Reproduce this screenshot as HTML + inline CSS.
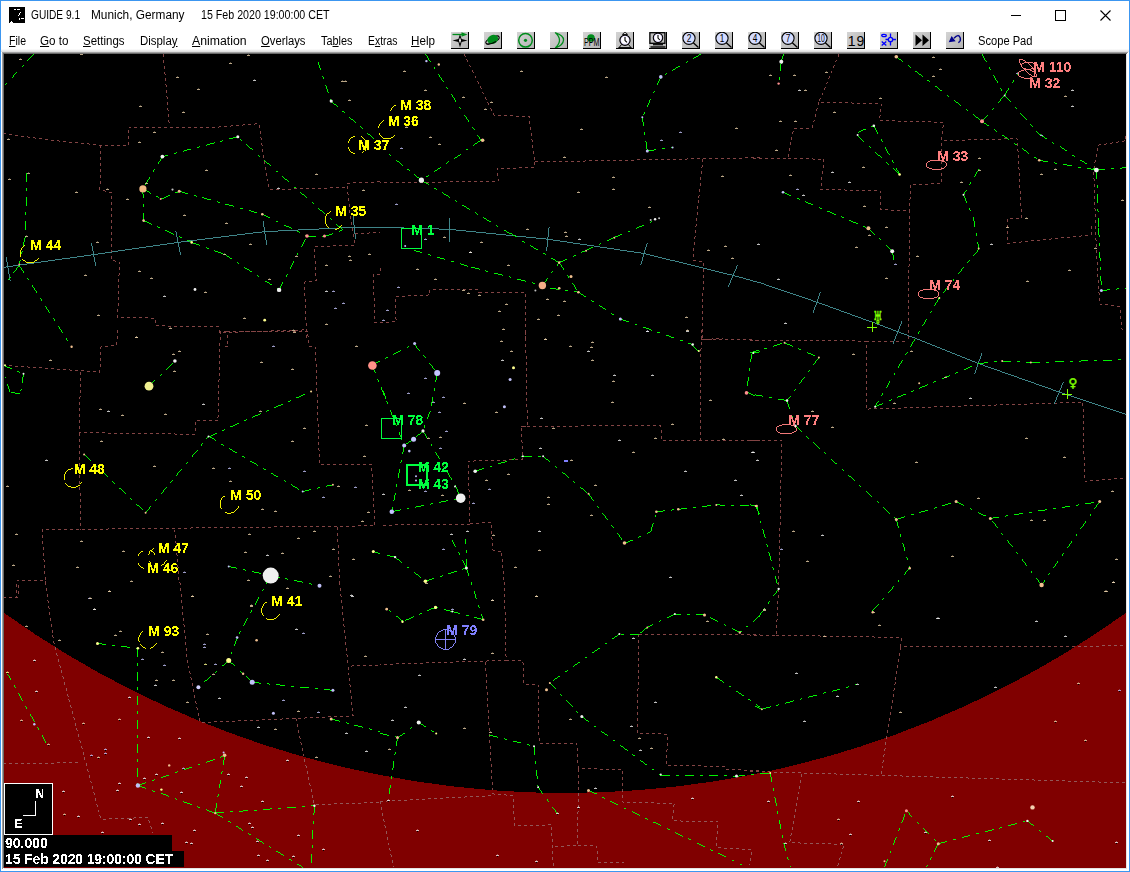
<!DOCTYPE html>
<html><head><meta charset="utf-8"><title>GUIDE 9.1</title>
<style>
html,body{margin:0;padding:0;}
body{width:1130px;height:872px;overflow:hidden;background:#fff;font-family:"Liberation Sans",sans-serif;position:relative;}
#win{position:absolute;left:0;top:0;width:1128px;height:870px;border:1px solid #3c96f0;background:#fff;}
#title{position:absolute;left:0;top:0;width:1128px;height:29px;background:#fff;}
#title .t{position:absolute;top:7px;display:inline-block;transform-origin:0 0;font-size:12px;color:#000;white-space:pre;}
#menu{position:absolute;left:0;top:29px;width:1128px;height:20px;background:#fff;}
#menu span.m{position:absolute;top:4px;display:inline-block;transform-origin:0 0;font-size:12px;color:#000;white-space:pre;}
#menu u{text-decoration:underline;text-underline-offset:1px;}
.tb{position:absolute;top:2px;width:17px;height:16px;background:linear-gradient(135deg,#d4d4d4,#b4b4b4);border-right:1px solid #000;border-bottom:1px solid #000;box-sizing:content-box;overflow:hidden}
#chartwrap{position:absolute;left:1px;top:50px;width:1126px;height:818px;background:#f0f0f0;}
svg{position:absolute;left:0;top:0;}
.lbl{font-family:"Liberation Sans",sans-serif;font-weight:bold;font-size:14px;}
</style></head><body>
<div id="win">

<div id="title">
<svg width="30" height="29" viewBox="0 0 30 29"><rect x="8" y="6" width="16" height="16" fill="#000"/><path d="M13 8h2M16 8h3M18 13l2-2M17 15l2-2M18 17l1 2M20 17h3M9 21h3M10 20v2" stroke="#fff" stroke-width="1" fill="none" shape-rendering="crispEdges"/></svg>
<span class="t" style="left:30px;transform:scaleX(0.8448)">GUIDE 9.1</span>
<span class="t" style="left:89.5px;transform:scaleX(0.9875)">Munich, Germany</span>
<span class="t" style="left:199.5px;transform:scaleX(0.8880)">15 Feb 2020 19:00:00 CET</span>
<svg width="1128" height="29" viewBox="1 1 1128 29" style="left:0;top:0"><g stroke="#000" stroke-width="1" fill="none" shape-rendering="crispEdges"><path d="M1011 15.5h10"/><rect x="1055.5" y="10.5" width="10" height="10"/></g><path d="M1100.5 10.5l10 10M1110.5 10.5l-10 10" stroke="#000" stroke-width="1.1" fill="none"/></svg>
</div>
<div id="menu">
<span class="m" style="left:8px;transform:scaleX(0.8788)"><u>F</u>ile</span>
<span class="m" style="left:39px;transform:scaleX(0.9718)"><u>G</u>o to</span>
<span class="m" style="left:82px;transform:scaleX(0.9575)"><u>S</u>ettings</span>
<span class="m" style="left:138.5px;transform:scaleX(0.9528)">Displa<u>y</u></span>
<span class="m" style="left:190.5px;transform:scaleX(1.0214)"><u>A</u>nimation</span>
<span class="m" style="left:260px;transform:scaleX(0.9399)"><u>O</u>verlays</span>
<span class="m" style="left:320px;transform:scaleX(0.9081)">Ta<u>b</u>les</span>
<span class="m" style="left:366.5px;transform:scaleX(0.8676)">E<u>x</u>tras</span>
<span class="m" style="left:410px;transform:scaleX(0.9722)"><u>H</u>elp</span>
<div class="tb" style="left:450px"><svg width="18" height="16" viewBox="0 0 18 16"><path d="M9 2L10.6 6.9L16.5 8.5L10.6 10.1L9 15.5L7.4 10.1L1.5 8.5L7.4 6.9Z" fill="#000"/><path d="M9 5.5L10 8.5L9 11.5L8 8.5Z" fill="#fff"/><path d="M1.5 2.5H13" stroke="#008c1c" stroke-width="1.3"/><path d="M10.5 0.2L16.5 2.5L10.5 4.8Z" fill="#008c1c"/></svg></div>
<div class="tb" style="left:483px"><svg width="18" height="16" viewBox="0 0 18 16"><ellipse cx="8.5" cy="8" rx="7.3" ry="2.6" transform="rotate(-25 8.5 8)" fill="none" stroke="#000" stroke-width="1.1"/><ellipse cx="8.7" cy="7.4" rx="5.6" ry="4.4" transform="rotate(-25 8.7 7.4)" fill="#008c1c"/><path d="M2.2 11.6 Q5 13.5 12 9.6" fill="none" stroke="#000" stroke-width="1.1"/></svg></div>
<div class="tb" style="left:516px"><svg width="18" height="16" viewBox="0 0 18 16"><circle cx="8.5" cy="8.3" r="6.8" fill="none" stroke="#008c1c" stroke-width="1.5"/><circle cx="8.5" cy="8.3" r="1.6" fill="#008c1c"/></svg></div>
<div class="tb" style="left:549px"><svg width="18" height="16" viewBox="0 0 18 16"><path d="M5.5 0.8 Q14 3.5 13.5 8.3 Q13 13.5 5.5 15.8 Q9.5 12 9.5 8.3 Q9.5 4.5 5.5 0.8Z" fill="none" stroke="#008c1c" stroke-width="1.3" stroke-linejoin="round"/></svg></div>
<div class="tb" style="left:582px"><svg width="18" height="16" viewBox="0 0 18 16"><circle cx="8" cy="6" r="3.8" fill="#008c1c"/><text x="8.8" y="14.3" font-family="Liberation Sans,sans-serif" font-size="10.5" text-anchor="middle" fill="#000" textLength="15.5" lengthAdjust="spacingAndGlyphs">PPM</text></svg></div>
<div class="tb" style="left:615px"><svg width="18" height="16" viewBox="0 0 18 16"><path d="M6.5 2.5Q9 -1.5 11.5 2.5Z" fill="#fff" stroke="#000" stroke-width="0.9"/><path d="M5.5 12.5L3 15.7M12.5 12.5L15 15.7M2.5 15.6H15.5" stroke="#000" stroke-width="1" fill="none"/><circle cx="9" cy="8.2" r="5.1" fill="#e4dcff" stroke="#000" stroke-width="1.2"/><circle cx="9" cy="8.2" r="3.6" fill="#fff"/><path d="M9 5V8.5L11 10.3" stroke="#000" stroke-width="1.1" fill="none"/></svg></div>
<div class="tb" style="left:648px"><svg width="18" height="16" viewBox="0 0 18 16"><rect x="0.9" y="0.7" width="15" height="10.6" fill="#c0c0c0" stroke="#000" stroke-width="1.3"/><circle cx="9" cy="5.8" r="4.7" fill="#e4dcff" stroke="#000" stroke-width="1.1"/><circle cx="9" cy="5.8" r="3.2" fill="#fff"/><path d="M9 3V6L10.8 8" stroke="#000" stroke-width="1.1" fill="none"/><path d="M4 12.7H14" stroke="#000" stroke-width="1.2"/><path d="M1.5 15H16.5" stroke="#000" stroke-width="1.4"/></svg></div>
<div class="tb" style="left:681px"><svg width="18" height="16" viewBox="0 0 18 16"><line x1="11" y1="10.5" x2="16.5" y2="15.5" stroke="#000" stroke-width="1.3"/><circle cx="7" cy="6.3" r="6.1" fill="#d4dcff" stroke="#000" stroke-width="1.1"/><text x="7" y="9.6" font-family="Liberation Sans,sans-serif" font-size="10" text-anchor="middle" fill="#000" textLength="4.6" lengthAdjust="spacingAndGlyphs">2</text></svg></div>
<div class="tb" style="left:714px"><svg width="18" height="16" viewBox="0 0 18 16"><line x1="11" y1="10.5" x2="16.5" y2="15.5" stroke="#000" stroke-width="1.3"/><circle cx="7" cy="6.3" r="6.1" fill="#d4dcff" stroke="#000" stroke-width="1.1"/><text x="7" y="9.6" font-family="Liberation Sans,sans-serif" font-size="10" text-anchor="middle" fill="#000" textLength="4.6" lengthAdjust="spacingAndGlyphs">1</text></svg></div>
<div class="tb" style="left:747px"><svg width="18" height="16" viewBox="0 0 18 16"><line x1="11" y1="10.5" x2="16.5" y2="15.5" stroke="#000" stroke-width="1.3"/><circle cx="7" cy="6.3" r="6.1" fill="#d4dcff" stroke="#000" stroke-width="1.1"/><text x="7" y="9.6" font-family="Liberation Sans,sans-serif" font-size="10" text-anchor="middle" fill="#000" textLength="4.6" lengthAdjust="spacingAndGlyphs">4</text></svg></div>
<div class="tb" style="left:780px"><svg width="18" height="16" viewBox="0 0 18 16"><line x1="11" y1="10.5" x2="16.5" y2="15.5" stroke="#000" stroke-width="1.3"/><circle cx="7" cy="6.3" r="6.1" fill="#d4dcff" stroke="#000" stroke-width="1.1"/><text x="7" y="9.6" font-family="Liberation Sans,sans-serif" font-size="10" text-anchor="middle" fill="#000" textLength="4.6" lengthAdjust="spacingAndGlyphs">7</text></svg></div>
<div class="tb" style="left:813px"><svg width="18" height="16" viewBox="0 0 18 16"><line x1="11" y1="10.5" x2="16.5" y2="15.5" stroke="#000" stroke-width="1.3"/><circle cx="7" cy="6.3" r="6.1" fill="#d4dcff" stroke="#000" stroke-width="1.1"/><text x="7" y="9.6" font-family="Liberation Sans,sans-serif" font-size="10" text-anchor="middle" fill="#000" textLength="7.5" lengthAdjust="spacingAndGlyphs">10</text></svg></div>
<div class="tb" style="left:846px"><svg width="18" height="16" viewBox="0 0 18 16"><text x="9.5" y="13.5" font-family="Liberation Sans,sans-serif" font-size="14" text-anchor="middle" fill="#000" letter-spacing="1">19</text></svg></div>
<div class="tb" style="left:879px"><svg width="18" height="16" viewBox="0 0 18 16"><g fill="none" stroke="#0000ff" stroke-width="1.3"><ellipse cx="4" cy="3.5" rx="2.3" ry="1.2"/><path d="M1.7 9.5L6.3 13.5M6.3 9.5L1.7 13.5"/><circle cx="10.5" cy="7.5" r="2.2"/><path d="M10.5 1.5V5.3M10.5 9.7V13.5M5.5 7.5H8.3M12.7 7.5H16"/></g></svg></div>
<div class="tb" style="left:912px"><svg width="18" height="16" viewBox="0 0 18 16"><path d="M2.5 2.5L9 8.3L2.5 14Z M9.5 2.5L16 8.3L9.5 14Z" fill="#000"/></svg></div>
<div class="tb" style="left:945px"><svg width="18" height="16" viewBox="0 0 18 16"><path d="M8 6.3 Q12.5 1 14.3 6 Q15 9.3 12.3 10.7" fill="none" stroke="#00008c" stroke-width="1.4"/><path d="M2.7 10.3L9.6 9.3L5.6 4Z" fill="#00008c"/></svg></div>
<span class="m" style="left:977px;transform:scaleX(0.9286)">Scope Pad</span>
</div>
<div style="position:absolute;left:0;top:48px;width:1128px;height:3px;background:linear-gradient(#fff,#d8d8d8)"></div>
<div style="position:absolute;left:1px;top:51px;width:1126px;height:817px;background:#fff;border-left:1px solid #a0a0a0;border-top:1px solid #a0a0a0;box-sizing:border-box"></div>
<div style="position:absolute;left:2px;top:52px;width:1124px;height:815px;background:#e8e8e8;border-left:1px solid #696969;border-top:1px solid #696969;box-sizing:border-box"></div>
<div style="position:absolute;left:3px;top:867px;width:1123px;height:1px;background:#e3e3e3"></div><div style="position:absolute;left:1125px;top:53px;width:1px;height:815px;background:#e3e3e3"></div>
</div>
<svg width="1122" height="814" viewBox="4 54 1122 814" style="left:4px;top:54px">
<rect x="4" y="54" width="1122" height="814" fill="#000"/>
<path d="M4 612.9 A964 964 0 0 0 1126 612.9 L1126 868 L4 868 Z" fill="#800000" shape-rendering="crispEdges"/>
<g fill="none" stroke="#8a4848" stroke-width="0.95" stroke-dasharray="3 3" shape-rendering="crispEdges">
<path d="M163.1 54.0 L166.5 90.4 L169.2 124.7"/>
<path d="M128.5 127.4 L218.6 127.0 L258.9 123.7 L263.3 154.3 L269.0 189.6 L346.4 187.6"/>
<path d="M380.0 181.9 L347.0 183.2 L349.7 211.5 L354.8 245.1 L314.4 246.8 L316.1 280.5 L304.3 282.1 L306.7 339.3"/>
<path d="M354.8 233.4 L380.0 232.7"/>
<path d="M380.0 274.7 L373.3 274.7 L375.0 322.5 L380.0 322.5"/>
<path d="M3.4 133.4 L50.4 140.2 L100.9 145.2 L128.5 145.2 L128.5 127.4"/>
<path d="M100.9 145.2 L99.9 189.6 L112.0 193.0 L111.0 260.3 L119.4 261.9 L117.7 317.5 L155.4 318.1 L156.4 325.9 L218.6 326.5 L219.3 332.6 L306.0 329.9"/>
<path d="M464.1 54.0 L494.3 115.6 L529.0 116.3 L534.7 162.0 L702.8 158.7 L760.0 157.7"/>
<path d="M534.7 162.0 L534.7 167.7 L497.0 168.4 L498.4 181.2 L380.0 182.9"/>
<path d="M702.8 158.7 L697.8 208.1 L692.7 260.3 L703.5 261.9 L702.2 339.3 L723.0 338.7"/>
<path d="M380.0 268.0 L381.7 273.7"/>
<path d="M380.0 322.5 L396.1 321.8 L395.1 296.6 L429.8 294.9 L429.8 289.9 L477.5 289.5 L479.2 292.9 L525.3 292.9 L525.3 339.3"/>
<path d="M839.1 54.0 L818.9 102.1 L881.2 103.8 L879.5 120.6 L943.4 122.3 L941.7 140.8 L1017.3 138.5 L1021.7 218.2 L1007.3 219.2 L1007.3 243.4 L1091.3 235.0 L1091.3 226.6 L1094.7 226.6"/>
<path d="M818.9 102.1 L812.2 128.1 L793.7 128.1 L787.7 158.3 L750.0 158.3"/>
<path d="M787.7 158.3 L824.0 159.3 L820.6 189.6 L880.1 190.6 L880.1 209.8 L909.7 210.5 L910.4 184.6 L941.7 183.6 L941.7 140.8"/>
<path d="M909.7 210.5 L908.1 339.3"/>
<path d="M1125.6 135.8 L1125.6 140.8 L1098.1 145.2 L1093.7 169.4 L1096.4 251.9 L1099.7 304.0 L1119.9 306.4 L1121.6 329.2 L1125.6 329.2"/>
<path d="M117.7 330.0 L116.7 345.1 L100.9 346.8 L99.9 372.1 L3.4 365.3"/>
<path d="M80.7 372.1 L79.0 432.6 L195.0 434.3 L195.0 420.8 L217.9 420.8 L220.3 331.7 L227.0 331.7 L228.0 346.8 L223.6 346.8"/>
<path d="M227.0 331.0 L307.7 331.0 L308.7 346.1 L315.4 346.8 L319.5 464.6 L371.6 464.6 L375.0 525.8 L42.0 529.8 L45.4 580.6 L16.8 580.6 L16.8 597.5 L3.4 597.5"/>
<path d="M79.0 432.6 L80.7 529.5"/>
<path d="M45.4 580.6 L45.4 582.0"/>
<path d="M174.9 529.5 L179.2 582.0"/>
<path d="M337.3 526.8 L339.6 582.0"/>
<path d="M525.6 331.7 L527.3 425.9 L521.2 426.6 L522.9 459.5 L468.1 461.2 L470.1 524.5 L380.0 525.1"/>
<path d="M470.1 523.8 L491.0 522.4 L492.7 550.4 L501.7 551.4 L503.8 582.0"/>
<path d="M521.2 426.6 L660.8 425.2 L661.8 440.0 L760.0 440.0"/>
<path d="M701.2 330.0 L700.1 440.0"/>
<path d="M701.2 339.4 L760.0 340.1"/>
<path d="M750.0 340.1 L866.0 341.1 L866.0 409.1 L1082.9 402.3 L1084.6 481.4 L1125.6 478.0"/>
<path d="M866.0 341.1 L908.1 341.1"/>
<path d="M750.0 440.0 L781.9 440.0 L778.6 588.7"/>
<path d="M45.4 582.0 L53.8 642.6 L100.9 819.2 L148.0 817.5 L153.0 832.6"/>
<path d="M179.9 582.0 L187.3 660.1 L200.1 722.6 L353.1 715.9 L348.1 666.1 L380.0 665.4"/>
<path d="M339.6 582.0 L348.1 666.1"/>
<path d="M295.9 718.3 L304.3 758.6 L314.4 804.7 L380.0 802.4"/>
<path d="M3.4 763.7 L80.7 762.7"/>
<path d="M3.4 597.1 L18.5 597.1 L18.5 582.0"/>
<path d="M504.4 582.0 L506.1 660.4 L380.0 664.4"/>
<path d="M506.1 660.4 L522.9 660.4 L523.9 683.9 L538.1 684.6 L539.1 743.5 L576.7 743.5 L578.4 768.7 L622.8 769.4 L622.8 802.4 L674.2 803.4 L672.6 820.9 L718.0 821.5 L716.3 847.8 L751.6 849.5 L749.9 864.6"/>
<path d="M485.3 661.7 L492.7 793.9 L512.8 795.6 L514.5 825.9 L551.5 824.9 L553.2 867.3"/>
<path d="M380.0 801.4 L492.7 795.6"/>
<path d="M578.4 768.7 L577.7 845.4 L553.2 846.8"/>
<path d="M577.7 845.4 L596.9 846.1 L597.9 862.9 L623.8 862.9"/>
<path d="M638.9 634.1 L760.0 634.8"/>
<path d="M638.9 634.1 L637.3 733.4 L667.5 734.1 L666.5 765.4 L724.7 766.4 L726.4 769.7 L760.0 770.4"/>
<path d="M380.0 801.4 L393.5 867.3"/>
<path d="M778.6 588.7 L776.2 635.2 L750.0 635.2"/>
<path d="M776.2 635.2 L901.3 637.5 L900.7 646.9 L1125.6 645.9"/>
<path d="M900.7 646.9 L881.2 773.8"/>
<path d="M750.0 771.4 L1125.6 782.8"/>
<path d="M802.1 773.8 L789.7 842.7 L844.2 844.4 L837.4 867.3"/>
</g>
<clipPath id="hz"><path d="M4 612.9 A964 964 0 0 0 1126 612.9 L1126 868 L4 868 Z"/></clipPath>
<g fill="none" stroke="#925858" stroke-width="0.95" stroke-dasharray="3 3" shape-rendering="crispEdges" clip-path="url(#hz)">
<path d="M163.1 54.0 L166.5 90.4 L169.2 124.7"/>
<path d="M128.5 127.4 L218.6 127.0 L258.9 123.7 L263.3 154.3 L269.0 189.6 L346.4 187.6"/>
<path d="M380.0 181.9 L347.0 183.2 L349.7 211.5 L354.8 245.1 L314.4 246.8 L316.1 280.5 L304.3 282.1 L306.7 339.3"/>
<path d="M354.8 233.4 L380.0 232.7"/>
<path d="M380.0 274.7 L373.3 274.7 L375.0 322.5 L380.0 322.5"/>
<path d="M3.4 133.4 L50.4 140.2 L100.9 145.2 L128.5 145.2 L128.5 127.4"/>
<path d="M100.9 145.2 L99.9 189.6 L112.0 193.0 L111.0 260.3 L119.4 261.9 L117.7 317.5 L155.4 318.1 L156.4 325.9 L218.6 326.5 L219.3 332.6 L306.0 329.9"/>
<path d="M464.1 54.0 L494.3 115.6 L529.0 116.3 L534.7 162.0 L702.8 158.7 L760.0 157.7"/>
<path d="M534.7 162.0 L534.7 167.7 L497.0 168.4 L498.4 181.2 L380.0 182.9"/>
<path d="M702.8 158.7 L697.8 208.1 L692.7 260.3 L703.5 261.9 L702.2 339.3 L723.0 338.7"/>
<path d="M380.0 268.0 L381.7 273.7"/>
<path d="M380.0 322.5 L396.1 321.8 L395.1 296.6 L429.8 294.9 L429.8 289.9 L477.5 289.5 L479.2 292.9 L525.3 292.9 L525.3 339.3"/>
<path d="M839.1 54.0 L818.9 102.1 L881.2 103.8 L879.5 120.6 L943.4 122.3 L941.7 140.8 L1017.3 138.5 L1021.7 218.2 L1007.3 219.2 L1007.3 243.4 L1091.3 235.0 L1091.3 226.6 L1094.7 226.6"/>
<path d="M818.9 102.1 L812.2 128.1 L793.7 128.1 L787.7 158.3 L750.0 158.3"/>
<path d="M787.7 158.3 L824.0 159.3 L820.6 189.6 L880.1 190.6 L880.1 209.8 L909.7 210.5 L910.4 184.6 L941.7 183.6 L941.7 140.8"/>
<path d="M909.7 210.5 L908.1 339.3"/>
<path d="M1125.6 135.8 L1125.6 140.8 L1098.1 145.2 L1093.7 169.4 L1096.4 251.9 L1099.7 304.0 L1119.9 306.4 L1121.6 329.2 L1125.6 329.2"/>
<path d="M117.7 330.0 L116.7 345.1 L100.9 346.8 L99.9 372.1 L3.4 365.3"/>
<path d="M80.7 372.1 L79.0 432.6 L195.0 434.3 L195.0 420.8 L217.9 420.8 L220.3 331.7 L227.0 331.7 L228.0 346.8 L223.6 346.8"/>
<path d="M227.0 331.0 L307.7 331.0 L308.7 346.1 L315.4 346.8 L319.5 464.6 L371.6 464.6 L375.0 525.8 L42.0 529.8 L45.4 580.6 L16.8 580.6 L16.8 597.5 L3.4 597.5"/>
<path d="M79.0 432.6 L80.7 529.5"/>
<path d="M45.4 580.6 L45.4 582.0"/>
<path d="M174.9 529.5 L179.2 582.0"/>
<path d="M337.3 526.8 L339.6 582.0"/>
<path d="M525.6 331.7 L527.3 425.9 L521.2 426.6 L522.9 459.5 L468.1 461.2 L470.1 524.5 L380.0 525.1"/>
<path d="M470.1 523.8 L491.0 522.4 L492.7 550.4 L501.7 551.4 L503.8 582.0"/>
<path d="M521.2 426.6 L660.8 425.2 L661.8 440.0 L760.0 440.0"/>
<path d="M701.2 330.0 L700.1 440.0"/>
<path d="M701.2 339.4 L760.0 340.1"/>
<path d="M750.0 340.1 L866.0 341.1 L866.0 409.1 L1082.9 402.3 L1084.6 481.4 L1125.6 478.0"/>
<path d="M866.0 341.1 L908.1 341.1"/>
<path d="M750.0 440.0 L781.9 440.0 L778.6 588.7"/>
<path d="M45.4 582.0 L53.8 642.6 L100.9 819.2 L148.0 817.5 L153.0 832.6"/>
<path d="M179.9 582.0 L187.3 660.1 L200.1 722.6 L353.1 715.9 L348.1 666.1 L380.0 665.4"/>
<path d="M339.6 582.0 L348.1 666.1"/>
<path d="M295.9 718.3 L304.3 758.6 L314.4 804.7 L380.0 802.4"/>
<path d="M3.4 763.7 L80.7 762.7"/>
<path d="M3.4 597.1 L18.5 597.1 L18.5 582.0"/>
<path d="M504.4 582.0 L506.1 660.4 L380.0 664.4"/>
<path d="M506.1 660.4 L522.9 660.4 L523.9 683.9 L538.1 684.6 L539.1 743.5 L576.7 743.5 L578.4 768.7 L622.8 769.4 L622.8 802.4 L674.2 803.4 L672.6 820.9 L718.0 821.5 L716.3 847.8 L751.6 849.5 L749.9 864.6"/>
<path d="M485.3 661.7 L492.7 793.9 L512.8 795.6 L514.5 825.9 L551.5 824.9 L553.2 867.3"/>
<path d="M380.0 801.4 L492.7 795.6"/>
<path d="M578.4 768.7 L577.7 845.4 L553.2 846.8"/>
<path d="M577.7 845.4 L596.9 846.1 L597.9 862.9 L623.8 862.9"/>
<path d="M638.9 634.1 L760.0 634.8"/>
<path d="M638.9 634.1 L637.3 733.4 L667.5 734.1 L666.5 765.4 L724.7 766.4 L726.4 769.7 L760.0 770.4"/>
<path d="M380.0 801.4 L393.5 867.3"/>
<path d="M778.6 588.7 L776.2 635.2 L750.0 635.2"/>
<path d="M776.2 635.2 L901.3 637.5 L900.7 646.9 L1125.6 645.9"/>
<path d="M900.7 646.9 L881.2 773.8"/>
<path d="M750.0 771.4 L1125.6 782.8"/>
<path d="M802.1 773.8 L789.7 842.7 L844.2 844.4 L837.4 867.3"/>
</g>
<g fill="none" stroke="#428c90" stroke-width="0.95" shape-rendering="crispEdges">
<path d="M4.0 267.3 L94.2 254.5 L178.2 242.4 L264.0 231.7 L353.1 227.3 L380.0 227.3 L448.9 229.3 L547.1 239.1 L644.0 253.5 L733.1 275.4 L760.0 282.8 L817.3 302.3 L877.8 324.2 L918.1 339.3 L978.7 363.6 L1064.4 393.9 L1125.6 414.1"/>
<path d="M6.1 256.9 L10.1 280.5"/>
<path d="M91.5 243.4 L95.8 266.3"/>
<path d="M175.9 231.0 L180.6 254.5"/>
<path d="M263.0 220.9 L266.7 244.5"/>
<path d="M353.1 215.9 L355.5 239.1"/>
<path d="M449.6 218.2 L449.6 241.8"/>
<path d="M549.2 226.6 L546.5 251.2"/>
<path d="M647.3 242.8 L640.6 265.3"/>
<path d="M737.5 265.3 L728.1 287.2"/>
<path d="M820.6 291.6 L812.9 313.4"/>
<path d="M902.0 321.0 L893.0 344.0"/>
<path d="M982.0 352.9 L974.6 373.7"/>
<path d="M1063.4 382.1 L1054.3 404.0"/>
</g>
<g fill="none" stroke="#00ff00" stroke-width="0.95" stroke-dasharray="9 6 3 6" shape-rendering="crispEdges">
<path d="M33.6 54.0L5.0 85.3"/>
<path d="M26.9 172.8L25.2 236.7M25.2 236.7L19.2 265.3"/>
<path d="M19.2 265.3L6.7 282.1"/>
<path d="M19.2 265.3L71.6 346.8"/>
<path d="M343.0 230.0L237.8 136.8M237.8 136.8L162.4 156.6M162.4 156.6L142.9 188.9M142.9 188.9L143.6 220.6M143.6 220.6L191.7 242.4M191.7 242.4L224.3 254.2M224.3 254.2L279.1 289.9M279.1 289.9L307.0 236.0M307.0 236.0L324.5 236.0M324.5 236.0L343.0 230.0"/>
<path d="M142.9 188.9L161.4 199.0M161.4 199.0L179.2 191.3M179.2 191.3L262.3 214.2M262.3 214.2L307.0 236.0"/>
<path d="M317.8 61.8L331.2 101.1M331.2 101.1L380.0 144.2"/>
<path d="M425.4 54.0L480.9 140.2M480.9 140.2L421.4 180.2M421.4 180.2L386.7 152.6"/>
<path d="M421.4 180.2L509.5 233.4M509.5 233.4L559.2 262.6M559.2 262.6L578.4 292.2"/>
<path d="M413.6 250.2L470.8 267.0M470.8 267.0L542.4 285.5M542.4 285.5L559.2 262.6M559.2 262.6L585.1 250.8M585.1 250.8L613.7 237.7M613.7 237.7L652.4 221.6"/>
<path d="M549.8 288.2L578.4 292.2M578.4 292.2L620.4 319.1M620.4 319.1L692.7 344.5M692.7 344.5L698.8 350.9"/>
<path d="M701.2 54.0L660.8 76.9M660.8 76.9L642.3 117.3M642.3 117.3L647.3 150.9M647.3 150.9L672.6 147.6"/>
<path d="M783.6 54.0L781.3 61.8M781.3 61.8L778.6 83.6"/>
<path d="M896.3 56.7L982.0 121.3M982.0 121.3L1039.2 160.3M1039.2 160.3L1096.4 170.1M1096.4 170.1L1125.6 167.7"/>
<path d="M982.0 54.0L1004.6 95.4M1004.6 95.4L1039.2 134.1M1039.2 134.1L1096.4 170.1"/>
<path d="M982.0 121.3L1004.6 95.4M1004.6 95.4L1019.0 71.9"/>
<path d="M857.6 132.4L873.8 125.7M873.8 125.7L899.6 174.5M899.6 174.5L857.6 135.8"/>
<path d="M783.0 192.3L868.4 228.3M868.4 228.3L892.2 251.2M892.2 251.2L894.6 263.6"/>
<path d="M978.7 169.4L963.5 194.7M963.5 194.7L973.6 218.2M973.6 218.2L978.7 248.5M978.7 248.5L939.3 297.9M939.3 297.9L875.1 406.7"/>
<path d="M1096.4 170.1L1098.7 228.3M1098.7 228.3L1101.4 290.5M1101.4 290.5L1125.6 288.2"/>
<path d="M3.4 365.3L23.5 373.7M23.5 373.7L20.2 393.9M20.2 393.9L10.1 392.2M10.1 392.2L5.0 377.1"/>
<path d="M149.0 386.2L174.9 361.0"/>
<path d="M84.1 454.5L145.6 512.7M145.6 512.7L208.5 436.6M208.5 436.6L311.1 391.6"/>
<path d="M208.5 436.6L302.7 491.5M302.7 491.5L332.9 484.8"/>
<path d="M228.7 566.5L270.7 575.6M270.7 575.6L319.5 585.7"/>
<path d="M373.3 551.4L380.0 553.7"/>
<path d="M372.0 365.0L414.6 343.5M414.6 343.5L437.2 373.1M437.2 373.1L430.4 410.7M430.4 410.7L423.0 430.9M423.0 430.9L413.6 439.3M413.6 439.3L404.2 445.4M404.2 445.4L391.8 511.7M391.8 511.7L460.7 498.2"/>
<path d="M372.0 365.0L404.2 445.4"/>
<path d="M423.0 430.9L455.7 486.4M455.7 486.4L460.7 498.2"/>
<path d="M383.4 390.6L386.7 402.3"/>
<path d="M475.2 471.3L522.9 456.2M522.9 456.2L543.1 456.2M543.1 456.2L588.5 493.8M588.5 493.8L624.5 543.0M624.5 543.0L650.7 531.9M650.7 531.9L656.4 511.7M656.4 511.7L678.3 509.3M678.3 509.3L716.3 504.9M716.3 504.9L755.6 506.0M755.6 506.0L760.0 515.0"/>
<path d="M386.7 555.4L395.1 557.1M395.1 557.1L425.4 581.3M425.4 581.3L466.4 567.9M466.4 567.9L452.3 540.3"/>
<path d="M466.4 567.9L465.8 538.6"/>
<path d="M760.0 351.9L751.6 353.5M751.6 353.5L746.5 392.2M746.5 392.2L755.0 396.3"/>
<path d="M750.0 352.9L784.6 342.8M784.6 342.8L818.9 357.6M818.9 357.6L787.0 400.6M787.0 400.6L750.0 393.9"/>
<path d="M787.0 400.6L795.4 425.9M795.4 425.9L896.3 519.4M896.3 519.4L909.7 568.2M909.7 568.2L871.1 612.6"/>
<path d="M896.3 519.4L956.1 501.6M956.1 501.6L990.4 518.4M990.4 518.4L1099.7 501.6M1099.7 501.6L1041.6 585.0M1041.6 585.0L990.4 518.4"/>
<path d="M750.0 504.9L756.7 506.0M756.7 506.0L778.6 589.0M778.6 589.0L756.7 619.3"/>
<path d="M875.1 406.7L978.7 363.6M978.7 363.6L1002.2 361.0M1002.2 361.0L1030.8 362.6M1030.8 362.6L1125.6 359.6"/>
<path d="M270.7 575.6L237.1 637.5M237.1 637.5L228.7 660.4M228.7 660.4L198.4 687.3"/>
<path d="M228.7 660.4L252.2 682.3M252.2 682.3L332.9 690.3"/>
<path d="M97.5 643.6L137.9 648.3M137.9 648.3L137.9 785.5M137.9 785.5L224.6 755.9M224.6 755.9L215.2 813.1M215.2 813.1L314.4 805.7M314.4 805.7L311.1 864.6"/>
<path d="M137.9 785.5L215.2 813.1M215.2 813.1L302.7 867.3"/>
<path d="M6.7 672.2L47.1 744.5"/>
<path d="M331.2 718.9L380.0 731.7"/>
<path d="M466.4 567.9L483.2 619.7M483.2 619.7L452.3 611.6M452.3 611.6L435.5 607.2M435.5 607.2L402.5 621.7M402.5 621.7L386.7 608.9"/>
<path d="M760.0 615.6L739.8 632.5M739.8 632.5L704.5 615.0M704.5 615.0L674.9 614.0M674.9 614.0L647.3 627.4M647.3 627.4L638.9 634.1M638.9 634.1L619.4 634.1M619.4 634.1L549.8 682.9M549.8 682.9L581.8 716.6M581.8 716.6L660.8 775.4M660.8 775.4L736.5 776.1M736.5 776.1L770.2 773.1"/>
<path d="M716.3 677.2L760.0 707.2"/>
<path d="M380.0 733.4L397.5 737.4M397.5 737.4L418.7 722.6M418.7 722.6L436.2 733.4"/>
<path d="M397.5 737.4L388.4 799.0"/>
<path d="M489.3 735.1L534.0 746.2M534.0 746.2L538.1 787.2M538.1 787.2L557.2 813.5"/>
<path d="M588.5 790.6L741.5 864.6"/>
<path d="M755.0 705.8L761.8 709.2M761.8 709.2L856.9 684.6"/>
<path d="M770.2 773.1L783.6 842.7M783.6 842.7L790.4 867.3"/>
<path d="M884.5 867.3L906.4 810.8M906.4 810.8L938.3 843.7M938.3 843.7L1027.4 820.9M1027.4 820.9L1052.7 841.0"/>
<path d="M938.3 843.7L926.5 867.3"/>
</g>
<path d="M19 59h3v1h-3z" fill="#e8d0a8" fill-opacity="0.8"/><path d="M20 58h1v1h-1z" fill="#e8d0a8" fill-opacity="0.35"/>
<path d="M80 54h3v1h-3z" fill="#e8d0a8" fill-opacity="0.8"/><path d="M81 53h1v1h-1z" fill="#e8d0a8" fill-opacity="0.35"/>
<path d="M229 63h3v1h-3z" fill="#e8d0a8" fill-opacity="0.8"/><path d="M230 62h1v1h-1z" fill="#e8d0a8" fill-opacity="0.35"/>
<path d="M247 55h3v1h-3z" fill="#e8d0a8" fill-opacity="0.8"/><path d="M248 54h1v1h-1z" fill="#e8d0a8" fill-opacity="0.35"/>
<path d="M176 77h3v1h-3z" fill="#e8d0a8" fill-opacity="0.8"/><path d="M177 76h1v1h-1z" fill="#e8d0a8" fill-opacity="0.35"/>
<path d="M197 89h3v1h-3z" fill="#e8d0a8" fill-opacity="0.8"/><path d="M198 88h1v1h-1z" fill="#e8d0a8" fill-opacity="0.35"/>
<path d="M139 106h3v1h-3z" fill="#e8d0a8" fill-opacity="0.8"/><path d="M140 105h1v1h-1z" fill="#e8d0a8" fill-opacity="0.35"/>
<path d="M182 112h3v1h-3z" fill="#e8d0a8" fill-opacity="0.8"/><path d="M183 111h1v1h-1z" fill="#e8d0a8" fill-opacity="0.35"/>
<path d="M153 132h3v1h-3z" fill="#e8d0a8" fill-opacity="0.8"/><path d="M154 131h1v1h-1z" fill="#e8d0a8" fill-opacity="0.35"/>
<path d="M138 142h3v1h-3z" fill="#e8d0a8" fill-opacity="0.8"/><path d="M139 141h1v1h-1z" fill="#e8d0a8" fill-opacity="0.35"/>
<path d="M7 139h3v1h-3z" fill="#e8d0a8" fill-opacity="0.8"/><path d="M8 138h1v1h-1z" fill="#e8d0a8" fill-opacity="0.35"/>
<path d="M8 179h3v1h-3z" fill="#e8d0a8" fill-opacity="0.8"/><path d="M9 178h1v1h-1z" fill="#e8d0a8" fill-opacity="0.35"/>
<path d="M27 173h3v1h-3z" fill="#e8d0a8" fill-opacity="0.8"/><path d="M28 172h1v1h-1z" fill="#e8d0a8" fill-opacity="0.35"/>
<path d="M75 192h3v1h-3z" fill="#e8d0a8" fill-opacity="0.8"/><path d="M76 191h1v1h-1z" fill="#e8d0a8" fill-opacity="0.35"/>
<path d="M106 189h3v1h-3z" fill="#e8d0a8" fill-opacity="0.8"/><path d="M107 188h1v1h-1z" fill="#e8d0a8" fill-opacity="0.35"/>
<path d="M126 199h3v1h-3z" fill="#e8d0a8" fill-opacity="0.8"/><path d="M127 198h1v1h-1z" fill="#e8d0a8" fill-opacity="0.35"/>
<path d="M183 215h3v1h-3z" fill="#e8d0a8" fill-opacity="0.8"/><path d="M184 214h1v1h-1z" fill="#e8d0a8" fill-opacity="0.35"/>
<path d="M225 223h3v1h-3z" fill="#e8d0a8" fill-opacity="0.8"/><path d="M226 222h1v1h-1z" fill="#e8d0a8" fill-opacity="0.35"/>
<path d="M205 170h3v1h-3z" fill="#e8d0a8" fill-opacity="0.8"/><path d="M206 169h1v1h-1z" fill="#e8d0a8" fill-opacity="0.35"/>
<path d="M315 174h3v1h-3z" fill="#e8d0a8" fill-opacity="0.8"/><path d="M316 173h1v1h-1z" fill="#e8d0a8" fill-opacity="0.35"/>
<path d="M362 190h3v1h-3z" fill="#e8d0a8" fill-opacity="0.8"/><path d="M363 189h1v1h-1z" fill="#e8d0a8" fill-opacity="0.35"/>
<path d="M341 81h3v1h-3z" fill="#e8d0a8" fill-opacity="0.8"/><path d="M342 80h1v1h-1z" fill="#e8d0a8" fill-opacity="0.35"/>
<path d="M344 81h3v1h-3z" fill="#e8d0a8" fill-opacity="0.8"/><path d="M345 80h1v1h-1z" fill="#e8d0a8" fill-opacity="0.35"/>
<path d="M348 100h3v1h-3z" fill="#e8d0a8" fill-opacity="0.8"/><path d="M349 99h1v1h-1z" fill="#e8d0a8" fill-opacity="0.35"/>
<path d="M84 275h3v1h-3z" fill="#e8d0a8" fill-opacity="0.8"/><path d="M85 274h1v1h-1z" fill="#e8d0a8" fill-opacity="0.35"/>
<path d="M138 271h3v1h-3z" fill="#e8d0a8" fill-opacity="0.8"/><path d="M139 270h1v1h-1z" fill="#e8d0a8" fill-opacity="0.35"/>
<path d="M150 278h3v1h-3z" fill="#e8d0a8" fill-opacity="0.8"/><path d="M151 277h1v1h-1z" fill="#e8d0a8" fill-opacity="0.35"/>
<path d="M204 292h3v1h-3z" fill="#e8d0a8" fill-opacity="0.8"/><path d="M205 291h1v1h-1z" fill="#e8d0a8" fill-opacity="0.35"/>
<path d="M97 315h3v1h-3z" fill="#e8d0a8" fill-opacity="0.8"/><path d="M98 314h1v1h-1z" fill="#e8d0a8" fill-opacity="0.35"/>
<path d="M243 318h3v1h-3z" fill="#e8d0a8" fill-opacity="0.8"/><path d="M244 317h1v1h-1z" fill="#e8d0a8" fill-opacity="0.35"/>
<path d="M292 330h3v1h-3z" fill="#e8d0a8" fill-opacity="0.8"/><path d="M293 329h1v1h-1z" fill="#e8d0a8" fill-opacity="0.35"/>
<path d="M169 328h3v1h-3z" fill="#e8d0a8" fill-opacity="0.8"/><path d="M170 327h1v1h-1z" fill="#e8d0a8" fill-opacity="0.35"/>
<path d="M135 337h3v1h-3z" fill="#e8d0a8" fill-opacity="0.8"/><path d="M136 336h1v1h-1z" fill="#e8d0a8" fill-opacity="0.35"/>
<path d="M325 265h3v1h-3z" fill="#e8d0a8" fill-opacity="0.8"/><path d="M326 264h1v1h-1z" fill="#e8d0a8" fill-opacity="0.35"/>
<path d="M325 324h3v1h-3z" fill="#e8d0a8" fill-opacity="0.8"/><path d="M326 323h1v1h-1z" fill="#e8d0a8" fill-opacity="0.35"/>
<path d="M368 254h3v1h-3z" fill="#e8d0a8" fill-opacity="0.8"/><path d="M369 253h1v1h-1z" fill="#e8d0a8" fill-opacity="0.35"/>
<path d="M348 256h3v1h-3z" fill="#e8d0a8" fill-opacity="0.8"/><path d="M349 255h1v1h-1z" fill="#e8d0a8" fill-opacity="0.35"/>
<path d="M349 260h3v1h-3z" fill="#e8d0a8" fill-opacity="0.8"/><path d="M350 259h1v1h-1z" fill="#e8d0a8" fill-opacity="0.35"/>
<path d="M295 256h3v1h-3z" fill="#e8d0a8" fill-opacity="0.8"/><path d="M296 255h1v1h-1z" fill="#e8d0a8" fill-opacity="0.35"/>
<path d="M268 279h3v1h-3z" fill="#e8d0a8" fill-opacity="0.8"/><path d="M269 278h1v1h-1z" fill="#e8d0a8" fill-opacity="0.35"/>
<path d="M249 244h3v1h-3z" fill="#e8d0a8" fill-opacity="0.8"/><path d="M250 243h1v1h-1z" fill="#e8d0a8" fill-opacity="0.35"/>
<path d="M96 242h3v1h-3z" fill="#e8d0a8" fill-opacity="0.8"/><path d="M97 241h1v1h-1z" fill="#e8d0a8" fill-opacity="0.35"/>
<path d="M25 236h3v1h-3z" fill="#e8d0a8" fill-opacity="0.8"/><path d="M26 235h1v1h-1z" fill="#e8d0a8" fill-opacity="0.35"/>
<path d="M145 183h3v1h-3z" fill="#e8d0a8" fill-opacity="0.8"/><path d="M146 182h1v1h-1z" fill="#e8d0a8" fill-opacity="0.35"/>
<path d="M223 254h3v1h-3z" fill="#e8d0a8" fill-opacity="0.8"/><path d="M224 253h1v1h-1z" fill="#e8d0a8" fill-opacity="0.35"/>
<path d="M253 80h3v1h-3z" fill="#f0f0f0" fill-opacity="0.8"/><path d="M254 79h1v1h-1z" fill="#f0f0f0" fill-opacity="0.35"/>
<path d="M163 296h3v1h-3z" fill="#f0f0f0" fill-opacity="0.8"/><path d="M164 295h1v1h-1z" fill="#f0f0f0" fill-opacity="0.35"/>
<path d="M325 291h3v1h-3z" fill="#f0f0f0" fill-opacity="0.8"/><path d="M326 290h1v1h-1z" fill="#f0f0f0" fill-opacity="0.35"/>
<path d="M277 188h3v1h-3z" fill="#f0f0f0" fill-opacity="0.8"/><path d="M278 187h1v1h-1z" fill="#f0f0f0" fill-opacity="0.35"/>
<path d="M332 291h3v1h-3z" fill="#c0c0f8" fill-opacity="0.8"/><path d="M333 290h1v1h-1z" fill="#c0c0f8" fill-opacity="0.35"/>
<path d="M342 303h3v1h-3z" fill="#c0c0f8" fill-opacity="0.8"/><path d="M343 302h1v1h-1z" fill="#c0c0f8" fill-opacity="0.35"/>
<path d="M334 308h3v1h-3z" fill="#c0c0f8" fill-opacity="0.8"/><path d="M335 307h1v1h-1z" fill="#c0c0f8" fill-opacity="0.35"/>
<circle cx="331.2" cy="101.1" r="1.6" fill="#f0f0f0"/>
<circle cx="237.8" cy="136.8" r="1.5" fill="#f0f0f0"/>
<circle cx="162.4" cy="156.6" r="1.9" fill="#f0f0f0"/>
<circle cx="142.9" cy="188.9" r="3.6" fill="#f2b884"/>
<circle cx="179.2" cy="191.3" r="1.5" fill="#f0c090"/>
<circle cx="172.5" cy="189.6" r="1.1" fill="#c0c0c0"/>
<circle cx="262.3" cy="214.2" r="1.3" fill="#f0c090"/>
<circle cx="143.6" cy="220.6" r="1.3" fill="#f0c090"/>
<circle cx="191.7" cy="242.4" r="1.3" fill="#ffff90"/>
<circle cx="279.1" cy="289.9" r="2.2" fill="#f0f0f0"/>
<circle cx="307.0" cy="236.0" r="1.8" fill="#ff9090"/>
<circle cx="324.5" cy="236.0" r="1.5" fill="#ff9090"/>
<circle cx="195.0" cy="289.5" r="1.4" fill="#f0f0f0"/>
<circle cx="264.7" cy="320.2" r="1.4" fill="#ffff90"/>
<circle cx="19.2" cy="264.6" r="1.0" fill="#ff9090"/>
<circle cx="160.7" cy="199.0" r="1.0" fill="#ff9090"/>
<path d="M403 71h3v1h-3z" fill="#e8d0a8" fill-opacity="0.8"/><path d="M404 70h1v1h-1z" fill="#e8d0a8" fill-opacity="0.35"/>
<path d="M520 71h3v1h-3z" fill="#e8d0a8" fill-opacity="0.8"/><path d="M521 70h1v1h-1z" fill="#e8d0a8" fill-opacity="0.35"/>
<path d="M605 77h3v1h-3z" fill="#e8d0a8" fill-opacity="0.8"/><path d="M606 76h1v1h-1z" fill="#e8d0a8" fill-opacity="0.35"/>
<path d="M424 90h3v1h-3z" fill="#e8d0a8" fill-opacity="0.8"/><path d="M425 89h1v1h-1z" fill="#e8d0a8" fill-opacity="0.35"/>
<path d="M462 97h3v1h-3z" fill="#e8d0a8" fill-opacity="0.8"/><path d="M463 96h1v1h-1z" fill="#e8d0a8" fill-opacity="0.35"/>
<path d="M490 102h3v1h-3z" fill="#e8d0a8" fill-opacity="0.8"/><path d="M491 101h1v1h-1z" fill="#e8d0a8" fill-opacity="0.35"/>
<path d="M484 109h3v1h-3z" fill="#e8d0a8" fill-opacity="0.8"/><path d="M485 108h1v1h-1z" fill="#e8d0a8" fill-opacity="0.35"/>
<path d="M580 129h3v1h-3z" fill="#e8d0a8" fill-opacity="0.8"/><path d="M581 128h1v1h-1z" fill="#e8d0a8" fill-opacity="0.35"/>
<path d="M429 137h3v1h-3z" fill="#e8d0a8" fill-opacity="0.8"/><path d="M430 136h1v1h-1z" fill="#e8d0a8" fill-opacity="0.35"/>
<path d="M438 144h3v1h-3z" fill="#e8d0a8" fill-opacity="0.8"/><path d="M439 143h1v1h-1z" fill="#e8d0a8" fill-opacity="0.35"/>
<path d="M405 127h3v1h-3z" fill="#e8d0a8" fill-opacity="0.8"/><path d="M406 126h1v1h-1z" fill="#e8d0a8" fill-opacity="0.35"/>
<path d="M735 128h3v1h-3z" fill="#e8d0a8" fill-opacity="0.8"/><path d="M736 127h1v1h-1z" fill="#e8d0a8" fill-opacity="0.35"/>
<path d="M563 157h3v1h-3z" fill="#e8d0a8" fill-opacity="0.8"/><path d="M564 156h1v1h-1z" fill="#e8d0a8" fill-opacity="0.35"/>
<path d="M612 177h3v1h-3z" fill="#e8d0a8" fill-opacity="0.8"/><path d="M613 176h1v1h-1z" fill="#e8d0a8" fill-opacity="0.35"/>
<path d="M612 189h3v1h-3z" fill="#e8d0a8" fill-opacity="0.8"/><path d="M613 188h1v1h-1z" fill="#e8d0a8" fill-opacity="0.35"/>
<path d="M577 192h3v1h-3z" fill="#e8d0a8" fill-opacity="0.8"/><path d="M578 191h1v1h-1z" fill="#e8d0a8" fill-opacity="0.35"/>
<path d="M721 176h3v1h-3z" fill="#e8d0a8" fill-opacity="0.8"/><path d="M722 175h1v1h-1z" fill="#e8d0a8" fill-opacity="0.35"/>
<path d="M648 207h3v1h-3z" fill="#e8d0a8" fill-opacity="0.8"/><path d="M649 206h1v1h-1z" fill="#e8d0a8" fill-opacity="0.35"/>
<path d="M526 229h3v1h-3z" fill="#e8d0a8" fill-opacity="0.8"/><path d="M527 228h1v1h-1z" fill="#e8d0a8" fill-opacity="0.35"/>
<path d="M564 232h3v1h-3z" fill="#e8d0a8" fill-opacity="0.8"/><path d="M565 231h1v1h-1z" fill="#e8d0a8" fill-opacity="0.35"/>
<path d="M565 236h3v1h-3z" fill="#e8d0a8" fill-opacity="0.8"/><path d="M566 235h1v1h-1z" fill="#e8d0a8" fill-opacity="0.35"/>
<path d="M443 237h3v1h-3z" fill="#e8d0a8" fill-opacity="0.8"/><path d="M444 236h1v1h-1z" fill="#e8d0a8" fill-opacity="0.35"/>
<path d="M480 242h3v1h-3z" fill="#e8d0a8" fill-opacity="0.8"/><path d="M481 241h1v1h-1z" fill="#e8d0a8" fill-opacity="0.35"/>
<path d="M469 252h3v1h-3z" fill="#e8d0a8" fill-opacity="0.8"/><path d="M470 251h1v1h-1z" fill="#e8d0a8" fill-opacity="0.35"/>
<path d="M507 265h3v1h-3z" fill="#e8d0a8" fill-opacity="0.8"/><path d="M508 264h1v1h-1z" fill="#e8d0a8" fill-opacity="0.35"/>
<path d="M416 269h3v1h-3z" fill="#e8d0a8" fill-opacity="0.8"/><path d="M417 268h1v1h-1z" fill="#e8d0a8" fill-opacity="0.35"/>
<path d="M434 279h3v1h-3z" fill="#e8d0a8" fill-opacity="0.8"/><path d="M435 278h1v1h-1z" fill="#e8d0a8" fill-opacity="0.35"/>
<path d="M462 290h3v1h-3z" fill="#e8d0a8" fill-opacity="0.8"/><path d="M463 289h1v1h-1z" fill="#e8d0a8" fill-opacity="0.35"/>
<path d="M467 293h3v1h-3z" fill="#e8d0a8" fill-opacity="0.8"/><path d="M468 292h1v1h-1z" fill="#e8d0a8" fill-opacity="0.35"/>
<path d="M478 295h3v1h-3z" fill="#e8d0a8" fill-opacity="0.8"/><path d="M479 294h1v1h-1z" fill="#e8d0a8" fill-opacity="0.35"/>
<path d="M505 304h3v1h-3z" fill="#e8d0a8" fill-opacity="0.8"/><path d="M506 303h1v1h-1z" fill="#e8d0a8" fill-opacity="0.35"/>
<path d="M498 311h3v1h-3z" fill="#e8d0a8" fill-opacity="0.8"/><path d="M499 310h1v1h-1z" fill="#e8d0a8" fill-opacity="0.35"/>
<path d="M537 319h3v1h-3z" fill="#e8d0a8" fill-opacity="0.8"/><path d="M538 318h1v1h-1z" fill="#e8d0a8" fill-opacity="0.35"/>
<path d="M557 315h3v1h-3z" fill="#e8d0a8" fill-opacity="0.8"/><path d="M558 314h1v1h-1z" fill="#e8d0a8" fill-opacity="0.35"/>
<path d="M563 301h3v1h-3z" fill="#e8d0a8" fill-opacity="0.8"/><path d="M564 300h1v1h-1z" fill="#e8d0a8" fill-opacity="0.35"/>
<path d="M546 299h3v1h-3z" fill="#e8d0a8" fill-opacity="0.8"/><path d="M547 298h1v1h-1z" fill="#e8d0a8" fill-opacity="0.35"/>
<path d="M685 317h3v1h-3z" fill="#e8d0a8" fill-opacity="0.8"/><path d="M686 316h1v1h-1z" fill="#e8d0a8" fill-opacity="0.35"/>
<path d="M686 330h3v1h-3z" fill="#e8d0a8" fill-opacity="0.8"/><path d="M687 329h1v1h-1z" fill="#e8d0a8" fill-opacity="0.35"/>
<path d="M502 329h3v1h-3z" fill="#e8d0a8" fill-opacity="0.8"/><path d="M503 328h1v1h-1z" fill="#e8d0a8" fill-opacity="0.35"/>
<path d="M544 339h3v1h-3z" fill="#e8d0a8" fill-opacity="0.8"/><path d="M545 338h1v1h-1z" fill="#e8d0a8" fill-opacity="0.35"/>
<path d="M707 250h3v1h-3z" fill="#e8d0a8" fill-opacity="0.8"/><path d="M708 249h1v1h-1z" fill="#e8d0a8" fill-opacity="0.35"/>
<path d="M724 246h3v1h-3z" fill="#e8d0a8" fill-opacity="0.8"/><path d="M725 245h1v1h-1z" fill="#e8d0a8" fill-opacity="0.35"/>
<path d="M731 258h3v1h-3z" fill="#e8d0a8" fill-opacity="0.8"/><path d="M732 257h1v1h-1z" fill="#e8d0a8" fill-opacity="0.35"/>
<path d="M400 148h3v1h-3z" fill="#c0c0f8" fill-opacity="0.8"/><path d="M401 147h1v1h-1z" fill="#c0c0f8" fill-opacity="0.35"/>
<path d="M679 132h3v1h-3z" fill="#c0c0f8" fill-opacity="0.8"/><path d="M680 131h1v1h-1z" fill="#c0c0f8" fill-opacity="0.35"/>
<path d="M660 140h3v1h-3z" fill="#c0c0f8" fill-opacity="0.8"/><path d="M661 139h1v1h-1z" fill="#c0c0f8" fill-opacity="0.35"/>
<path d="M395 204h3v1h-3z" fill="#c0c0f8" fill-opacity="0.8"/><path d="M396 203h1v1h-1z" fill="#c0c0f8" fill-opacity="0.35"/>
<path d="M424 239h3v1h-3z" fill="#c0c0f8" fill-opacity="0.8"/><path d="M425 238h1v1h-1z" fill="#c0c0f8" fill-opacity="0.35"/>
<path d="M397 287h3v1h-3z" fill="#c0c0f8" fill-opacity="0.8"/><path d="M398 286h1v1h-1z" fill="#c0c0f8" fill-opacity="0.35"/>
<path d="M386 310h3v1h-3z" fill="#c0c0f8" fill-opacity="0.8"/><path d="M387 309h1v1h-1z" fill="#c0c0f8" fill-opacity="0.35"/>
<path d="M382 320h3v1h-3z" fill="#c0c0f8" fill-opacity="0.8"/><path d="M383 319h1v1h-1z" fill="#c0c0f8" fill-opacity="0.35"/>
<path d="M646 331h3v1h-3z" fill="#c0c0f8" fill-opacity="0.8"/><path d="M647 330h1v1h-1z" fill="#c0c0f8" fill-opacity="0.35"/>
<path d="M578 239h3v1h-3z" fill="#f0f0f0" fill-opacity="0.8"/><path d="M579 238h1v1h-1z" fill="#f0f0f0" fill-opacity="0.35"/>
<path d="M469 252h3v1h-3z" fill="#f0f0f0" fill-opacity="0.8"/><path d="M470 251h1v1h-1z" fill="#f0f0f0" fill-opacity="0.35"/>
<circle cx="426.4" cy="61.1" r="1.2" fill="#c0c0f8"/>
<circle cx="438.8" cy="64.5" r="1.2" fill="#f0c090"/>
<circle cx="482.6" cy="140.2" r="1.8" fill="#f0c090"/>
<circle cx="421.4" cy="180.2" r="2.6" fill="#f0f0f0"/>
<circle cx="660.8" cy="76.9" r="1.8" fill="#c0c0f8"/>
<circle cx="642.3" cy="117.3" r="1.0" fill="#c0c0f8"/>
<circle cx="647.3" cy="150.9" r="1.5" fill="#c0c0f8"/>
<circle cx="672.6" cy="147.6" r="1.0" fill="#c0c0f8"/>
<circle cx="542.4" cy="285.5" r="3.7" fill="#f4ac88"/>
<circle cx="559.2" cy="262.6" r="1.3" fill="#f0c090"/>
<circle cx="571.0" cy="276.4" r="1.5" fill="#f0c090"/>
<circle cx="578.4" cy="292.2" r="1.3" fill="#f0c090"/>
<circle cx="559.2" cy="288.2" r="1.3" fill="#f0c090"/>
<circle cx="620.4" cy="319.1" r="1.5" fill="#c0c0f8"/>
<circle cx="614.4" cy="237.7" r="1.0" fill="#f0c090"/>
<circle cx="586.1" cy="250.8" r="1.0" fill="#f0c090"/>
<circle cx="405.2" cy="246.1" r="1.0" fill="#c0c0f8"/>
<circle cx="650.7" cy="219.9" r="1.0" fill="#c0c0c0"/>
<circle cx="655.1" cy="219.2" r="1.2" fill="#f0f0f0"/>
<circle cx="659.1" cy="218.2" r="1.0" fill="#c0c0c0"/>
<circle cx="535.4" cy="290.5" r="1.0" fill="#c0c0c0"/>
<path d="M769 75h3v1h-3z" fill="#e8d0a8" fill-opacity="0.8"/><path d="M770 74h1v1h-1z" fill="#e8d0a8" fill-opacity="0.35"/>
<path d="M793 75h3v1h-3z" fill="#e8d0a8" fill-opacity="0.8"/><path d="M794 74h1v1h-1z" fill="#e8d0a8" fill-opacity="0.35"/>
<path d="M825 72h3v1h-3z" fill="#e8d0a8" fill-opacity="0.8"/><path d="M826 71h1v1h-1z" fill="#e8d0a8" fill-opacity="0.35"/>
<path d="M932 57h3v1h-3z" fill="#e8d0a8" fill-opacity="0.8"/><path d="M933 56h1v1h-1z" fill="#e8d0a8" fill-opacity="0.35"/>
<path d="M939 69h3v1h-3z" fill="#e8d0a8" fill-opacity="0.8"/><path d="M940 68h1v1h-1z" fill="#e8d0a8" fill-opacity="0.35"/>
<path d="M932 76h3v1h-3z" fill="#e8d0a8" fill-opacity="0.8"/><path d="M933 75h1v1h-1z" fill="#e8d0a8" fill-opacity="0.35"/>
<path d="M804 90h3v1h-3z" fill="#e8d0a8" fill-opacity="0.8"/><path d="M805 89h1v1h-1z" fill="#e8d0a8" fill-opacity="0.35"/>
<path d="M879 98h3v1h-3z" fill="#e8d0a8" fill-opacity="0.8"/><path d="M880 97h1v1h-1z" fill="#e8d0a8" fill-opacity="0.35"/>
<path d="M833 112h3v1h-3z" fill="#e8d0a8" fill-opacity="0.8"/><path d="M834 111h1v1h-1z" fill="#e8d0a8" fill-opacity="0.35"/>
<path d="M779 121h3v1h-3z" fill="#e8d0a8" fill-opacity="0.8"/><path d="M780 120h1v1h-1z" fill="#e8d0a8" fill-opacity="0.35"/>
<path d="M794 121h3v1h-3z" fill="#e8d0a8" fill-opacity="0.8"/><path d="M795 120h1v1h-1z" fill="#e8d0a8" fill-opacity="0.35"/>
<path d="M775 150h3v1h-3z" fill="#e8d0a8" fill-opacity="0.8"/><path d="M776 149h1v1h-1z" fill="#e8d0a8" fill-opacity="0.35"/>
<path d="M862 167h3v1h-3z" fill="#e8d0a8" fill-opacity="0.8"/><path d="M863 166h1v1h-1z" fill="#e8d0a8" fill-opacity="0.35"/>
<path d="M789 175h3v1h-3z" fill="#e8d0a8" fill-opacity="0.8"/><path d="M790 174h1v1h-1z" fill="#e8d0a8" fill-opacity="0.35"/>
<path d="M863 206h3v1h-3z" fill="#e8d0a8" fill-opacity="0.8"/><path d="M864 205h1v1h-1z" fill="#e8d0a8" fill-opacity="0.35"/>
<path d="M885 227h3v1h-3z" fill="#e8d0a8" fill-opacity="0.8"/><path d="M886 226h1v1h-1z" fill="#e8d0a8" fill-opacity="0.35"/>
<path d="M868 235h3v1h-3z" fill="#e8d0a8" fill-opacity="0.8"/><path d="M869 234h1v1h-1z" fill="#e8d0a8" fill-opacity="0.35"/>
<path d="M855 247h3v1h-3z" fill="#e8d0a8" fill-opacity="0.8"/><path d="M856 246h1v1h-1z" fill="#e8d0a8" fill-opacity="0.35"/>
<path d="M916 256h3v1h-3z" fill="#e8d0a8" fill-opacity="0.8"/><path d="M917 255h1v1h-1z" fill="#e8d0a8" fill-opacity="0.35"/>
<path d="M885 278h3v1h-3z" fill="#e8d0a8" fill-opacity="0.8"/><path d="M886 277h1v1h-1z" fill="#e8d0a8" fill-opacity="0.35"/>
<path d="M978 158h3v1h-3z" fill="#e8d0a8" fill-opacity="0.8"/><path d="M979 157h1v1h-1z" fill="#e8d0a8" fill-opacity="0.35"/>
<path d="M978 170h3v1h-3z" fill="#e8d0a8" fill-opacity="0.8"/><path d="M979 169h1v1h-1z" fill="#e8d0a8" fill-opacity="0.35"/>
<path d="M960 182h3v1h-3z" fill="#e8d0a8" fill-opacity="0.8"/><path d="M961 181h1v1h-1z" fill="#e8d0a8" fill-opacity="0.35"/>
<path d="M1040 174h3v1h-3z" fill="#e8d0a8" fill-opacity="0.8"/><path d="M1041 173h1v1h-1z" fill="#e8d0a8" fill-opacity="0.35"/>
<path d="M1054 169h3v1h-3z" fill="#e8d0a8" fill-opacity="0.8"/><path d="M1055 168h1v1h-1z" fill="#e8d0a8" fill-opacity="0.35"/>
<path d="M1064 96h3v1h-3z" fill="#e8d0a8" fill-opacity="0.8"/><path d="M1065 95h1v1h-1z" fill="#e8d0a8" fill-opacity="0.35"/>
<path d="M1025 218h3v1h-3z" fill="#e8d0a8" fill-opacity="0.8"/><path d="M1026 217h1v1h-1z" fill="#e8d0a8" fill-opacity="0.35"/>
<path d="M1006 227h3v1h-3z" fill="#e8d0a8" fill-opacity="0.8"/><path d="M1007 226h1v1h-1z" fill="#e8d0a8" fill-opacity="0.35"/>
<path d="M1068 270h3v1h-3z" fill="#e8d0a8" fill-opacity="0.8"/><path d="M1069 269h1v1h-1z" fill="#e8d0a8" fill-opacity="0.35"/>
<path d="M1026 281h3v1h-3z" fill="#e8d0a8" fill-opacity="0.8"/><path d="M1027 280h1v1h-1z" fill="#e8d0a8" fill-opacity="0.35"/>
<path d="M1121 200h3v1h-3z" fill="#e8d0a8" fill-opacity="0.8"/><path d="M1122 199h1v1h-1z" fill="#e8d0a8" fill-opacity="0.35"/>
<path d="M1094 248h3v1h-3z" fill="#e8d0a8" fill-opacity="0.8"/><path d="M1095 247h1v1h-1z" fill="#e8d0a8" fill-opacity="0.35"/>
<path d="M798 90h3v1h-3z" fill="#f0f0f0" fill-opacity="0.8"/><path d="M799 89h1v1h-1z" fill="#f0f0f0" fill-opacity="0.35"/>
<path d="M831 172h3v1h-3z" fill="#f0f0f0" fill-opacity="0.8"/><path d="M832 171h1v1h-1z" fill="#f0f0f0" fill-opacity="0.35"/>
<path d="M848 182h3v1h-3z" fill="#f0f0f0" fill-opacity="0.8"/><path d="M849 181h1v1h-1z" fill="#f0f0f0" fill-opacity="0.35"/>
<path d="M802 195h3v1h-3z" fill="#f0f0f0" fill-opacity="0.8"/><path d="M803 194h1v1h-1z" fill="#f0f0f0" fill-opacity="0.35"/>
<path d="M757 244h3v1h-3z" fill="#f0f0f0" fill-opacity="0.8"/><path d="M758 243h1v1h-1z" fill="#f0f0f0" fill-opacity="0.35"/>
<path d="M777 279h3v1h-3z" fill="#f0f0f0" fill-opacity="0.8"/><path d="M778 278h1v1h-1z" fill="#f0f0f0" fill-opacity="0.35"/>
<path d="M784 323h3v1h-3z" fill="#f0f0f0" fill-opacity="0.8"/><path d="M785 322h1v1h-1z" fill="#f0f0f0" fill-opacity="0.35"/>
<path d="M1071 90h3v1h-3z" fill="#f0f0f0" fill-opacity="0.8"/><path d="M1072 89h1v1h-1z" fill="#f0f0f0" fill-opacity="0.35"/>
<path d="M1071 106h3v1h-3z" fill="#f0f0f0" fill-opacity="0.8"/><path d="M1072 105h1v1h-1z" fill="#f0f0f0" fill-opacity="0.35"/>
<path d="M990 244h3v1h-3z" fill="#f0f0f0" fill-opacity="0.8"/><path d="M991 243h1v1h-1z" fill="#f0f0f0" fill-opacity="0.35"/>
<path d="M796 189h3v1h-3z" fill="#c0c0f8" fill-opacity="0.8"/><path d="M797 188h1v1h-1z" fill="#c0c0f8" fill-opacity="0.35"/>
<path d="M1040 135h3v1h-3z" fill="#c0c0f8" fill-opacity="0.8"/><path d="M1041 134h1v1h-1z" fill="#c0c0f8" fill-opacity="0.35"/>
<path d="M1016 73h3v1h-3z" fill="#c0c0f8" fill-opacity="0.8"/><path d="M1017 72h1v1h-1z" fill="#c0c0f8" fill-opacity="0.35"/>
<circle cx="781.3" cy="61.8" r="2.0" fill="#f0f0f0"/>
<circle cx="778.6" cy="83.6" r="1.2" fill="#ff9090"/>
<circle cx="896.3" cy="56.7" r="1.8" fill="#f0c090"/>
<circle cx="982.0" cy="121.3" r="2.0" fill="#ff9090"/>
<circle cx="1039.2" cy="160.3" r="1.3" fill="#f0c090"/>
<circle cx="1096.4" cy="170.1" r="2.4" fill="#f0f0f0"/>
<circle cx="873.8" cy="125.7" r="1.3" fill="#f0f0f0"/>
<circle cx="857.6" cy="135.1" r="1.0" fill="#f0f0f0"/>
<circle cx="899.6" cy="174.5" r="1.3" fill="#ffff90"/>
<circle cx="783.0" cy="192.3" r="1.3" fill="#c0c0f8"/>
<circle cx="868.4" cy="228.3" r="2.0" fill="#f0c090"/>
<circle cx="892.2" cy="251.2" r="2.0" fill="#f0f0f0"/>
<path d="M894 264h3v1h-3z" fill="#c0c0f8" fill-opacity="0.8"/><path d="M895 263h1v1h-1z" fill="#c0c0f8" fill-opacity="0.35"/>
<circle cx="963.5" cy="194.7" r="1.0" fill="#f0f0f0"/>
<circle cx="978.7" cy="248.5" r="1.0" fill="#f0c090"/>
<circle cx="939.3" cy="297.9" r="1.0" fill="#ffff90"/>
<circle cx="1101.4" cy="290.5" r="1.5" fill="#c0c0f8"/>
<circle cx="1004.6" cy="95.4" r="0.9" fill="#f0f0f0"/>
<path d="M135 337h3v1h-3z" fill="#e8d0a8" fill-opacity="0.8"/><path d="M136 336h1v1h-1z" fill="#e8d0a8" fill-opacity="0.35"/>
<path d="M178 351h3v1h-3z" fill="#e8d0a8" fill-opacity="0.8"/><path d="M179 350h1v1h-1z" fill="#e8d0a8" fill-opacity="0.35"/>
<path d="M172 354h3v1h-3z" fill="#e8d0a8" fill-opacity="0.8"/><path d="M173 353h1v1h-1z" fill="#e8d0a8" fill-opacity="0.35"/>
<path d="M173 371h3v1h-3z" fill="#e8d0a8" fill-opacity="0.8"/><path d="M174 370h1v1h-1z" fill="#e8d0a8" fill-opacity="0.35"/>
<path d="M49 360h3v1h-3z" fill="#e8d0a8" fill-opacity="0.8"/><path d="M50 359h1v1h-1z" fill="#e8d0a8" fill-opacity="0.35"/>
<path d="M260 362h3v1h-3z" fill="#e8d0a8" fill-opacity="0.8"/><path d="M261 361h1v1h-1z" fill="#e8d0a8" fill-opacity="0.35"/>
<path d="M291 369h3v1h-3z" fill="#e8d0a8" fill-opacity="0.8"/><path d="M292 368h1v1h-1z" fill="#e8d0a8" fill-opacity="0.35"/>
<path d="M355 346h3v1h-3z" fill="#e8d0a8" fill-opacity="0.8"/><path d="M356 345h1v1h-1z" fill="#e8d0a8" fill-opacity="0.35"/>
<path d="M293 332h3v1h-3z" fill="#e8d0a8" fill-opacity="0.8"/><path d="M294 331h1v1h-1z" fill="#e8d0a8" fill-opacity="0.35"/>
<path d="M99 409h3v1h-3z" fill="#e8d0a8" fill-opacity="0.8"/><path d="M100 408h1v1h-1z" fill="#e8d0a8" fill-opacity="0.35"/>
<path d="M121 415h3v1h-3z" fill="#e8d0a8" fill-opacity="0.8"/><path d="M122 414h1v1h-1z" fill="#e8d0a8" fill-opacity="0.35"/>
<path d="M164 414h3v1h-3z" fill="#e8d0a8" fill-opacity="0.8"/><path d="M165 413h1v1h-1z" fill="#e8d0a8" fill-opacity="0.35"/>
<path d="M259 411h3v1h-3z" fill="#e8d0a8" fill-opacity="0.8"/><path d="M260 410h1v1h-1z" fill="#e8d0a8" fill-opacity="0.35"/>
<path d="M303 428h3v1h-3z" fill="#e8d0a8" fill-opacity="0.8"/><path d="M304 427h1v1h-1z" fill="#e8d0a8" fill-opacity="0.35"/>
<path d="M291 441h3v1h-3z" fill="#e8d0a8" fill-opacity="0.8"/><path d="M292 440h1v1h-1z" fill="#e8d0a8" fill-opacity="0.35"/>
<path d="M365 425h3v1h-3z" fill="#e8d0a8" fill-opacity="0.8"/><path d="M366 424h1v1h-1z" fill="#e8d0a8" fill-opacity="0.35"/>
<path d="M100 441h3v1h-3z" fill="#e8d0a8" fill-opacity="0.8"/><path d="M101 440h1v1h-1z" fill="#e8d0a8" fill-opacity="0.35"/>
<path d="M6 486h3v1h-3z" fill="#e8d0a8" fill-opacity="0.8"/><path d="M7 485h1v1h-1z" fill="#e8d0a8" fill-opacity="0.35"/>
<path d="M153 466h3v1h-3z" fill="#e8d0a8" fill-opacity="0.8"/><path d="M154 465h1v1h-1z" fill="#e8d0a8" fill-opacity="0.35"/>
<path d="M212 468h3v1h-3z" fill="#e8d0a8" fill-opacity="0.8"/><path d="M213 467h1v1h-1z" fill="#e8d0a8" fill-opacity="0.35"/>
<path d="M363 456h3v1h-3z" fill="#e8d0a8" fill-opacity="0.8"/><path d="M364 455h1v1h-1z" fill="#e8d0a8" fill-opacity="0.35"/>
<path d="M337 486h3v1h-3z" fill="#e8d0a8" fill-opacity="0.8"/><path d="M338 485h1v1h-1z" fill="#e8d0a8" fill-opacity="0.35"/>
<path d="M229 481h3v1h-3z" fill="#e8d0a8" fill-opacity="0.8"/><path d="M230 480h1v1h-1z" fill="#e8d0a8" fill-opacity="0.35"/>
<path d="M261 509h3v1h-3z" fill="#e8d0a8" fill-opacity="0.8"/><path d="M262 508h1v1h-1z" fill="#e8d0a8" fill-opacity="0.35"/>
<path d="M274 511h3v1h-3z" fill="#e8d0a8" fill-opacity="0.8"/><path d="M275 510h1v1h-1z" fill="#e8d0a8" fill-opacity="0.35"/>
<path d="M367 512h3v1h-3z" fill="#e8d0a8" fill-opacity="0.8"/><path d="M368 511h1v1h-1z" fill="#e8d0a8" fill-opacity="0.35"/>
<path d="M361 521h3v1h-3z" fill="#e8d0a8" fill-opacity="0.8"/><path d="M362 520h1v1h-1z" fill="#e8d0a8" fill-opacity="0.35"/>
<path d="M15 534h3v1h-3z" fill="#e8d0a8" fill-opacity="0.8"/><path d="M16 533h1v1h-1z" fill="#e8d0a8" fill-opacity="0.35"/>
<path d="M80 541h3v1h-3z" fill="#e8d0a8" fill-opacity="0.8"/><path d="M81 540h1v1h-1z" fill="#e8d0a8" fill-opacity="0.35"/>
<path d="M122 551h3v1h-3z" fill="#e8d0a8" fill-opacity="0.8"/><path d="M123 550h1v1h-1z" fill="#e8d0a8" fill-opacity="0.35"/>
<path d="M12 565h3v1h-3z" fill="#e8d0a8" fill-opacity="0.8"/><path d="M13 564h1v1h-1z" fill="#e8d0a8" fill-opacity="0.35"/>
<path d="M76 567h3v1h-3z" fill="#e8d0a8" fill-opacity="0.8"/><path d="M77 566h1v1h-1z" fill="#e8d0a8" fill-opacity="0.35"/>
<path d="M130 581h3v1h-3z" fill="#e8d0a8" fill-opacity="0.8"/><path d="M131 580h1v1h-1z" fill="#e8d0a8" fill-opacity="0.35"/>
<path d="M108 591h3v1h-3z" fill="#e8d0a8" fill-opacity="0.8"/><path d="M109 590h1v1h-1z" fill="#e8d0a8" fill-opacity="0.35"/>
<path d="M93 609h3v1h-3z" fill="#e8d0a8" fill-opacity="0.8"/><path d="M94 608h1v1h-1z" fill="#e8d0a8" fill-opacity="0.35"/>
<path d="M191 596h3v1h-3z" fill="#e8d0a8" fill-opacity="0.8"/><path d="M192 595h1v1h-1z" fill="#e8d0a8" fill-opacity="0.35"/>
<path d="M248 534h3v1h-3z" fill="#e8d0a8" fill-opacity="0.8"/><path d="M249 533h1v1h-1z" fill="#e8d0a8" fill-opacity="0.35"/>
<path d="M244 552h3v1h-3z" fill="#e8d0a8" fill-opacity="0.8"/><path d="M245 551h1v1h-1z" fill="#e8d0a8" fill-opacity="0.35"/>
<path d="M281 553h3v1h-3z" fill="#e8d0a8" fill-opacity="0.8"/><path d="M282 552h1v1h-1z" fill="#e8d0a8" fill-opacity="0.35"/>
<path d="M297 538h3v1h-3z" fill="#e8d0a8" fill-opacity="0.8"/><path d="M298 537h1v1h-1z" fill="#e8d0a8" fill-opacity="0.35"/>
<path d="M313 531h3v1h-3z" fill="#e8d0a8" fill-opacity="0.8"/><path d="M314 530h1v1h-1z" fill="#e8d0a8" fill-opacity="0.35"/>
<path d="M332 549h3v1h-3z" fill="#e8d0a8" fill-opacity="0.8"/><path d="M333 548h1v1h-1z" fill="#e8d0a8" fill-opacity="0.35"/>
<path d="M352 559h3v1h-3z" fill="#e8d0a8" fill-opacity="0.8"/><path d="M353 558h1v1h-1z" fill="#e8d0a8" fill-opacity="0.35"/>
<path d="M329 576h3v1h-3z" fill="#e8d0a8" fill-opacity="0.8"/><path d="M330 575h1v1h-1z" fill="#e8d0a8" fill-opacity="0.35"/>
<path d="M247 580h3v1h-3z" fill="#e8d0a8" fill-opacity="0.8"/><path d="M248 579h1v1h-1z" fill="#e8d0a8" fill-opacity="0.35"/>
<path d="M250 605h3v1h-3z" fill="#e8d0a8" fill-opacity="0.8"/><path d="M251 604h1v1h-1z" fill="#e8d0a8" fill-opacity="0.35"/>
<path d="M286 588h3v1h-3z" fill="#e8d0a8" fill-opacity="0.8"/><path d="M287 587h1v1h-1z" fill="#e8d0a8" fill-opacity="0.35"/>
<path d="M107 411h3v1h-3z" fill="#f0f0f0" fill-opacity="0.8"/><path d="M108 410h1v1h-1z" fill="#f0f0f0" fill-opacity="0.35"/>
<path d="M45 460h3v1h-3z" fill="#f0f0f0" fill-opacity="0.8"/><path d="M46 459h1v1h-1z" fill="#f0f0f0" fill-opacity="0.35"/>
<path d="M202 404h3v1h-3z" fill="#f0f0f0" fill-opacity="0.8"/><path d="M203 403h1v1h-1z" fill="#f0f0f0" fill-opacity="0.35"/>
<path d="M266 555h3v1h-3z" fill="#f0f0f0" fill-opacity="0.8"/><path d="M267 554h1v1h-1z" fill="#f0f0f0" fill-opacity="0.35"/>
<path d="M351 596h3v1h-3z" fill="#f0f0f0" fill-opacity="0.8"/><path d="M352 595h1v1h-1z" fill="#f0f0f0" fill-opacity="0.35"/>
<path d="M272 346h3v1h-3z" fill="#c0c0f8" fill-opacity="0.8"/><path d="M273 345h1v1h-1z" fill="#c0c0f8" fill-opacity="0.35"/>
<path d="M228 468h3v1h-3z" fill="#c0c0f8" fill-opacity="0.8"/><path d="M229 467h1v1h-1z" fill="#c0c0f8" fill-opacity="0.35"/>
<path d="M303 471h3v1h-3z" fill="#c0c0f8" fill-opacity="0.8"/><path d="M304 470h1v1h-1z" fill="#c0c0f8" fill-opacity="0.35"/>
<path d="M354 487h3v1h-3z" fill="#c0c0f8" fill-opacity="0.8"/><path d="M355 486h1v1h-1z" fill="#c0c0f8" fill-opacity="0.35"/>
<path d="M322 497h3v1h-3z" fill="#c0c0f8" fill-opacity="0.8"/><path d="M323 496h1v1h-1z" fill="#c0c0f8" fill-opacity="0.35"/>
<path d="M88 598h3v1h-3z" fill="#c0c0f8" fill-opacity="0.8"/><path d="M89 597h1v1h-1z" fill="#c0c0f8" fill-opacity="0.35"/>
<path d="M183 572h3v1h-3z" fill="#c0c0f8" fill-opacity="0.8"/><path d="M184 571h1v1h-1z" fill="#c0c0f8" fill-opacity="0.35"/>
<circle cx="149.0" cy="386.2" r="4.4" fill="#f0f090"/>
<circle cx="174.9" cy="361.0" r="1.8" fill="#f0f0f0"/>
<circle cx="71.6" cy="346.8" r="1.2" fill="#f0c090"/>
<circle cx="23.5" cy="373.7" r="1.0" fill="#f0f0f0"/>
<circle cx="5.0" cy="365.3" r="1.0" fill="#ffff90"/>
<circle cx="145.6" cy="512.7" r="1.0" fill="#f0c090"/>
<circle cx="208.5" cy="436.6" r="1.0" fill="#f0f0f0"/>
<circle cx="311.1" cy="391.6" r="1.0" fill="#f0c090"/>
<circle cx="302.7" cy="491.5" r="1.0" fill="#c0c0f8"/>
<circle cx="332.9" cy="484.8" r="1.0" fill="#f0c090"/>
<circle cx="84.1" cy="454.5" r="1.0" fill="#f0c090"/>
<circle cx="270.7" cy="575.6" r="8.0" fill="#f0f0f0"/>
<circle cx="319.5" cy="585.7" r="2.0" fill="#c0c0f8"/>
<circle cx="228.7" cy="566.5" r="1.0" fill="#c0c0f8"/>
<circle cx="373.3" cy="551.4" r="1.5" fill="#ffff90"/>
<path d="M500 341h3v1h-3z" fill="#e8d0a8" fill-opacity="0.8"/><path d="M501 340h1v1h-1z" fill="#e8d0a8" fill-opacity="0.35"/>
<path d="M544 339h3v1h-3z" fill="#e8d0a8" fill-opacity="0.8"/><path d="M545 338h1v1h-1z" fill="#e8d0a8" fill-opacity="0.35"/>
<path d="M569 346h3v1h-3z" fill="#e8d0a8" fill-opacity="0.8"/><path d="M570 345h1v1h-1z" fill="#e8d0a8" fill-opacity="0.35"/>
<path d="M591 342h3v1h-3z" fill="#e8d0a8" fill-opacity="0.8"/><path d="M592 341h1v1h-1z" fill="#e8d0a8" fill-opacity="0.35"/>
<path d="M590 347h3v1h-3z" fill="#e8d0a8" fill-opacity="0.8"/><path d="M591 346h1v1h-1z" fill="#e8d0a8" fill-opacity="0.35"/>
<path d="M510 351h3v1h-3z" fill="#e8d0a8" fill-opacity="0.8"/><path d="M511 350h1v1h-1z" fill="#e8d0a8" fill-opacity="0.35"/>
<path d="M591 360h3v1h-3z" fill="#e8d0a8" fill-opacity="0.8"/><path d="M592 359h1v1h-1z" fill="#e8d0a8" fill-opacity="0.35"/>
<path d="M612 381h3v1h-3z" fill="#e8d0a8" fill-opacity="0.8"/><path d="M613 380h1v1h-1z" fill="#e8d0a8" fill-opacity="0.35"/>
<path d="M611 402h3v1h-3z" fill="#e8d0a8" fill-opacity="0.8"/><path d="M612 401h1v1h-1z" fill="#e8d0a8" fill-opacity="0.35"/>
<path d="M463 403h3v1h-3z" fill="#e8d0a8" fill-opacity="0.8"/><path d="M464 402h1v1h-1z" fill="#e8d0a8" fill-opacity="0.35"/>
<path d="M495 412h3v1h-3z" fill="#e8d0a8" fill-opacity="0.8"/><path d="M496 411h1v1h-1z" fill="#e8d0a8" fill-opacity="0.35"/>
<path d="M439 437h3v1h-3z" fill="#e8d0a8" fill-opacity="0.8"/><path d="M440 436h1v1h-1z" fill="#e8d0a8" fill-opacity="0.35"/>
<path d="M427 438h3v1h-3z" fill="#e8d0a8" fill-opacity="0.8"/><path d="M428 437h1v1h-1z" fill="#e8d0a8" fill-opacity="0.35"/>
<path d="M552 428h3v1h-3z" fill="#e8d0a8" fill-opacity="0.8"/><path d="M553 427h1v1h-1z" fill="#e8d0a8" fill-opacity="0.35"/>
<path d="M671 424h3v1h-3z" fill="#e8d0a8" fill-opacity="0.8"/><path d="M672 423h1v1h-1z" fill="#e8d0a8" fill-opacity="0.35"/>
<path d="M654 438h3v1h-3z" fill="#e8d0a8" fill-opacity="0.8"/><path d="M655 437h1v1h-1z" fill="#e8d0a8" fill-opacity="0.35"/>
<path d="M722 439h3v1h-3z" fill="#e8d0a8" fill-opacity="0.8"/><path d="M723 438h1v1h-1z" fill="#e8d0a8" fill-opacity="0.35"/>
<path d="M632 452h3v1h-3z" fill="#e8d0a8" fill-opacity="0.8"/><path d="M633 451h1v1h-1z" fill="#e8d0a8" fill-opacity="0.35"/>
<path d="M570 460h3v1h-3z" fill="#e8d0a8" fill-opacity="0.8"/><path d="M571 459h1v1h-1z" fill="#e8d0a8" fill-opacity="0.35"/>
<path d="M507 474h3v1h-3z" fill="#e8d0a8" fill-opacity="0.8"/><path d="M508 473h1v1h-1z" fill="#e8d0a8" fill-opacity="0.35"/>
<path d="M594 485h3v1h-3z" fill="#e8d0a8" fill-opacity="0.8"/><path d="M595 484h1v1h-1z" fill="#e8d0a8" fill-opacity="0.35"/>
<path d="M547 497h3v1h-3z" fill="#e8d0a8" fill-opacity="0.8"/><path d="M548 496h1v1h-1z" fill="#e8d0a8" fill-opacity="0.35"/>
<path d="M547 504h3v1h-3z" fill="#e8d0a8" fill-opacity="0.8"/><path d="M548 503h1v1h-1z" fill="#e8d0a8" fill-opacity="0.35"/>
<path d="M590 515h3v1h-3z" fill="#e8d0a8" fill-opacity="0.8"/><path d="M591 514h1v1h-1z" fill="#e8d0a8" fill-opacity="0.35"/>
<path d="M538 550h3v1h-3z" fill="#e8d0a8" fill-opacity="0.8"/><path d="M539 549h1v1h-1z" fill="#e8d0a8" fill-opacity="0.35"/>
<path d="M514 567h3v1h-3z" fill="#e8d0a8" fill-opacity="0.8"/><path d="M515 566h1v1h-1z" fill="#e8d0a8" fill-opacity="0.35"/>
<path d="M535 596h3v1h-3z" fill="#e8d0a8" fill-opacity="0.8"/><path d="M536 595h1v1h-1z" fill="#e8d0a8" fill-opacity="0.35"/>
<path d="M408 490h3v1h-3z" fill="#e8d0a8" fill-opacity="0.8"/><path d="M409 489h1v1h-1z" fill="#e8d0a8" fill-opacity="0.35"/>
<path d="M441 495h3v1h-3z" fill="#e8d0a8" fill-opacity="0.8"/><path d="M442 494h1v1h-1z" fill="#e8d0a8" fill-opacity="0.35"/>
<path d="M492 535h3v1h-3z" fill="#e8d0a8" fill-opacity="0.8"/><path d="M493 534h1v1h-1z" fill="#e8d0a8" fill-opacity="0.35"/>
<path d="M709 400h3v1h-3z" fill="#e8d0a8" fill-opacity="0.8"/><path d="M710 399h1v1h-1z" fill="#e8d0a8" fill-opacity="0.35"/>
<path d="M485 480h3v1h-3z" fill="#e8d0a8" fill-opacity="0.8"/><path d="M486 479h1v1h-1z" fill="#e8d0a8" fill-opacity="0.35"/>
<path d="M501 360h3v1h-3z" fill="#f0f0f0" fill-opacity="0.8"/><path d="M502 359h1v1h-1z" fill="#f0f0f0" fill-opacity="0.35"/>
<path d="M613 375h3v1h-3z" fill="#f0f0f0" fill-opacity="0.8"/><path d="M614 374h1v1h-1z" fill="#f0f0f0" fill-opacity="0.35"/>
<path d="M651 375h3v1h-3z" fill="#f0f0f0" fill-opacity="0.8"/><path d="M652 374h1v1h-1z" fill="#f0f0f0" fill-opacity="0.35"/>
<path d="M540 418h3v1h-3z" fill="#f0f0f0" fill-opacity="0.8"/><path d="M541 417h1v1h-1z" fill="#f0f0f0" fill-opacity="0.35"/>
<path d="M618 440h3v1h-3z" fill="#f0f0f0" fill-opacity="0.8"/><path d="M619 439h1v1h-1z" fill="#f0f0f0" fill-opacity="0.35"/>
<path d="M751 452h3v1h-3z" fill="#f0f0f0" fill-opacity="0.8"/><path d="M752 451h1v1h-1z" fill="#f0f0f0" fill-opacity="0.35"/>
<path d="M539 448h3v1h-3z" fill="#f0f0f0" fill-opacity="0.8"/><path d="M540 447h1v1h-1z" fill="#f0f0f0" fill-opacity="0.35"/>
<path d="M684 471h3v1h-3z" fill="#f0f0f0" fill-opacity="0.8"/><path d="M685 470h1v1h-1z" fill="#f0f0f0" fill-opacity="0.35"/>
<path d="M734 480h3v1h-3z" fill="#f0f0f0" fill-opacity="0.8"/><path d="M735 479h1v1h-1z" fill="#f0f0f0" fill-opacity="0.35"/>
<path d="M740 495h3v1h-3z" fill="#f0f0f0" fill-opacity="0.8"/><path d="M741 494h1v1h-1z" fill="#f0f0f0" fill-opacity="0.35"/>
<path d="M538 531h3v1h-3z" fill="#f0f0f0" fill-opacity="0.8"/><path d="M539 530h1v1h-1z" fill="#f0f0f0" fill-opacity="0.35"/>
<path d="M491 600h3v1h-3z" fill="#f0f0f0" fill-opacity="0.8"/><path d="M492 599h1v1h-1z" fill="#f0f0f0" fill-opacity="0.35"/>
<path d="M669 577h3v1h-3z" fill="#f0f0f0" fill-opacity="0.8"/><path d="M670 576h1v1h-1z" fill="#f0f0f0" fill-opacity="0.35"/>
<path d="M382 494h3v1h-3z" fill="#f0f0f0" fill-opacity="0.8"/><path d="M383 493h1v1h-1z" fill="#f0f0f0" fill-opacity="0.35"/>
<path d="M450 534h3v1h-3z" fill="#f0f0f0" fill-opacity="0.8"/><path d="M451 533h1v1h-1z" fill="#f0f0f0" fill-opacity="0.35"/>
<path d="M466 531h3v1h-3z" fill="#f0f0f0" fill-opacity="0.8"/><path d="M467 530h1v1h-1z" fill="#f0f0f0" fill-opacity="0.35"/>
<path d="M646 331h3v1h-3z" fill="#f0f0f0" fill-opacity="0.8"/><path d="M647 330h1v1h-1z" fill="#f0f0f0" fill-opacity="0.35"/>
<path d="M686 331h3v1h-3z" fill="#f0f0f0" fill-opacity="0.8"/><path d="M687 330h1v1h-1z" fill="#f0f0f0" fill-opacity="0.35"/>
<path d="M587 351h3v1h-3z" fill="#f0f0f0" fill-opacity="0.8"/><path d="M588 350h1v1h-1z" fill="#f0f0f0" fill-opacity="0.35"/>
<path d="M424 378h3v1h-3z" fill="#c0c0f8" fill-opacity="0.8"/><path d="M425 377h1v1h-1z" fill="#c0c0f8" fill-opacity="0.35"/>
<path d="M407 393h3v1h-3z" fill="#c0c0f8" fill-opacity="0.8"/><path d="M408 392h1v1h-1z" fill="#c0c0f8" fill-opacity="0.35"/>
<path d="M442 397h3v1h-3z" fill="#c0c0f8" fill-opacity="0.8"/><path d="M443 396h1v1h-1z" fill="#c0c0f8" fill-opacity="0.35"/>
<path d="M432 402h3v1h-3z" fill="#c0c0f8" fill-opacity="0.8"/><path d="M433 401h1v1h-1z" fill="#c0c0f8" fill-opacity="0.35"/>
<path d="M438 412h3v1h-3z" fill="#c0c0f8" fill-opacity="0.8"/><path d="M439 411h1v1h-1z" fill="#c0c0f8" fill-opacity="0.35"/>
<path d="M445 431h3v1h-3z" fill="#c0c0f8" fill-opacity="0.8"/><path d="M446 430h1v1h-1z" fill="#c0c0f8" fill-opacity="0.35"/>
<path d="M488 489h3v1h-3z" fill="#c0c0f8" fill-opacity="0.8"/><path d="M489 488h1v1h-1z" fill="#c0c0f8" fill-opacity="0.35"/>
<path d="M424 491h3v1h-3z" fill="#c0c0f8" fill-opacity="0.8"/><path d="M425 490h1v1h-1z" fill="#c0c0f8" fill-opacity="0.35"/>
<path d="M472 503h3v1h-3z" fill="#c0c0f8" fill-opacity="0.8"/><path d="M473 502h1v1h-1z" fill="#c0c0f8" fill-opacity="0.35"/>
<path d="M442 549h3v1h-3z" fill="#c0c0f8" fill-opacity="0.8"/><path d="M443 548h1v1h-1z" fill="#c0c0f8" fill-opacity="0.35"/>
<path d="M451 609h3v1h-3z" fill="#c0c0f8" fill-opacity="0.8"/><path d="M452 608h1v1h-1z" fill="#c0c0f8" fill-opacity="0.35"/>
<path d="M439 448h3v1h-3z" fill="#c0c0f8" fill-opacity="0.8"/><path d="M440 447h1v1h-1z" fill="#c0c0f8" fill-opacity="0.35"/>
<circle cx="414.6" cy="343.5" r="1.5" fill="#c0c0f8"/>
<circle cx="437.2" cy="373.1" r="3.0" fill="#c4c4ff"/>
<circle cx="513.5" cy="367.7" r="1.5" fill="#ffff90"/>
<circle cx="510.1" cy="379.5" r="1.5" fill="#c0c0f8"/>
<circle cx="504.4" cy="406.7" r="1.5" fill="#c0c0f8"/>
<circle cx="423.0" cy="430.9" r="1.6" fill="#f0f0f0"/>
<circle cx="413.6" cy="439.3" r="2.5" fill="#c4c4ff"/>
<circle cx="404.2" cy="445.4" r="2.0" fill="#c4c4ff"/>
<circle cx="409.3" cy="451.1" r="1.3" fill="#c0c0f8"/>
<circle cx="460.7" cy="498.2" r="4.8" fill="#f0f0f0"/>
<circle cx="391.8" cy="511.7" r="2.3" fill="#c4c4ff"/>
<circle cx="475.2" cy="471.3" r="1.8" fill="#f0f0f0"/>
<circle cx="522.9" cy="456.2" r="1.0" fill="#f0f0f0"/>
<circle cx="543.1" cy="456.2" r="1.0" fill="#f0f0f0"/>
<circle cx="588.5" cy="493.8" r="1.0" fill="#f0c090"/>
<circle cx="624.5" cy="543.0" r="1.8" fill="#f0c090"/>
<circle cx="656.4" cy="511.7" r="1.3" fill="#f0c090"/>
<circle cx="678.3" cy="509.3" r="1.3" fill="#f0c090"/>
<circle cx="716.3" cy="504.9" r="1.0" fill="#f0c090"/>
<circle cx="755.6" cy="506.0" r="1.0" fill="#f0c090"/>
<circle cx="746.5" cy="392.9" r="1.8" fill="#ff9090"/>
<circle cx="692.7" cy="344.5" r="1.3" fill="#f0f0f0"/>
<circle cx="698.8" cy="350.9" r="1.0" fill="#ffff90"/>
<circle cx="425.4" cy="581.3" r="1.8" fill="#ffff90"/>
<circle cx="466.4" cy="567.9" r="1.5" fill="#f0f0f0"/>
<circle cx="395.1" cy="557.1" r="1.2" fill="#f0f0f0"/>
<circle cx="435.5" cy="607.6" r="1.5" fill="#ffff90"/>
<circle cx="386.7" cy="609.2" r="1.2" fill="#f0c090"/>
<circle cx="455.0" cy="486.4" r="1.0" fill="#f0f0f0"/>
<circle cx="416.0" cy="476.3" r="1.0" fill="#c0c0f8"/>
<circle cx="416.0" cy="480.4" r="1.0" fill="#c0c0f8"/>
<circle cx="372.4" cy="365.5" r="4.3" fill="#ff9088"/>
<path d="M852 354h3v1h-3z" fill="#e8d0a8" fill-opacity="0.8"/><path d="M853 353h1v1h-1z" fill="#e8d0a8" fill-opacity="0.35"/>
<path d="M893 403h3v1h-3z" fill="#e8d0a8" fill-opacity="0.8"/><path d="M894 402h1v1h-1z" fill="#e8d0a8" fill-opacity="0.35"/>
<path d="M831 427h3v1h-3z" fill="#e8d0a8" fill-opacity="0.8"/><path d="M832 426h1v1h-1z" fill="#e8d0a8" fill-opacity="0.35"/>
<path d="M811 411h3v1h-3z" fill="#e8d0a8" fill-opacity="0.8"/><path d="M812 410h1v1h-1z" fill="#e8d0a8" fill-opacity="0.35"/>
<path d="M1025 438h3v1h-3z" fill="#e8d0a8" fill-opacity="0.8"/><path d="M1026 437h1v1h-1z" fill="#e8d0a8" fill-opacity="0.35"/>
<path d="M1063 457h3v1h-3z" fill="#e8d0a8" fill-opacity="0.8"/><path d="M1064 456h1v1h-1z" fill="#e8d0a8" fill-opacity="0.35"/>
<path d="M915 462h3v1h-3z" fill="#e8d0a8" fill-opacity="0.8"/><path d="M916 461h1v1h-1z" fill="#e8d0a8" fill-opacity="0.35"/>
<path d="M977 498h3v1h-3z" fill="#e8d0a8" fill-opacity="0.8"/><path d="M978 497h1v1h-1z" fill="#e8d0a8" fill-opacity="0.35"/>
<path d="M1030 520h3v1h-3z" fill="#e8d0a8" fill-opacity="0.8"/><path d="M1031 519h1v1h-1z" fill="#e8d0a8" fill-opacity="0.35"/>
<path d="M1043 520h3v1h-3z" fill="#e8d0a8" fill-opacity="0.8"/><path d="M1044 519h1v1h-1z" fill="#e8d0a8" fill-opacity="0.35"/>
<path d="M792 531h3v1h-3z" fill="#e8d0a8" fill-opacity="0.8"/><path d="M793 530h1v1h-1z" fill="#e8d0a8" fill-opacity="0.35"/>
<path d="M806 561h3v1h-3z" fill="#e8d0a8" fill-opacity="0.8"/><path d="M807 560h1v1h-1z" fill="#e8d0a8" fill-opacity="0.35"/>
<path d="M951 556h3v1h-3z" fill="#e8d0a8" fill-opacity="0.8"/><path d="M952 555h1v1h-1z" fill="#e8d0a8" fill-opacity="0.35"/>
<path d="M1115 559h3v1h-3z" fill="#e8d0a8" fill-opacity="0.8"/><path d="M1116 558h1v1h-1z" fill="#e8d0a8" fill-opacity="0.35"/>
<path d="M1111 491h3v1h-3z" fill="#e8d0a8" fill-opacity="0.8"/><path d="M1112 490h1v1h-1z" fill="#e8d0a8" fill-opacity="0.35"/>
<path d="M1104 591h3v1h-3z" fill="#e8d0a8" fill-opacity="0.8"/><path d="M1105 590h1v1h-1z" fill="#e8d0a8" fill-opacity="0.35"/>
<path d="M763 609h3v1h-3z" fill="#e8d0a8" fill-opacity="0.8"/><path d="M764 608h1v1h-1z" fill="#e8d0a8" fill-opacity="0.35"/>
<path d="M872 612h3v1h-3z" fill="#e8d0a8" fill-opacity="0.8"/><path d="M873 611h1v1h-1z" fill="#e8d0a8" fill-opacity="0.35"/>
<path d="M944 377h3v1h-3z" fill="#e8d0a8" fill-opacity="0.8"/><path d="M945 376h1v1h-1z" fill="#e8d0a8" fill-opacity="0.35"/>
<path d="M910 351h3v1h-3z" fill="#e8d0a8" fill-opacity="0.8"/><path d="M911 350h1v1h-1z" fill="#e8d0a8" fill-opacity="0.35"/>
<path d="M969 398h3v1h-3z" fill="#f0f0f0" fill-opacity="0.8"/><path d="M970 397h1v1h-1z" fill="#f0f0f0" fill-opacity="0.35"/>
<path d="M752 452h3v1h-3z" fill="#f0f0f0" fill-opacity="0.8"/><path d="M753 451h1v1h-1z" fill="#f0f0f0" fill-opacity="0.35"/>
<path d="M756 460h3v1h-3z" fill="#f0f0f0" fill-opacity="0.8"/><path d="M757 459h1v1h-1z" fill="#f0f0f0" fill-opacity="0.35"/>
<path d="M821 535h3v1h-3z" fill="#f0f0f0" fill-opacity="0.8"/><path d="M822 534h1v1h-1z" fill="#f0f0f0" fill-opacity="0.35"/>
<path d="M1112 582h3v1h-3z" fill="#f0f0f0" fill-opacity="0.8"/><path d="M1113 581h1v1h-1z" fill="#f0f0f0" fill-opacity="0.35"/>
<path d="M936 618h3v1h-3z" fill="#f0f0f0" fill-opacity="0.8"/><path d="M937 617h1v1h-1z" fill="#f0f0f0" fill-opacity="0.35"/>
<path d="M780 549h3v1h-3z" fill="#c0c0f8" fill-opacity="0.8"/><path d="M781 548h1v1h-1z" fill="#c0c0f8" fill-opacity="0.35"/>
<circle cx="784.6" cy="342.8" r="1.0" fill="#f0c090"/>
<circle cx="818.9" cy="357.6" r="1.0" fill="#f0c090"/>
<circle cx="787.0" cy="400.6" r="1.3" fill="#f0f0f0"/>
<circle cx="753.4" cy="352.9" r="1.0" fill="#f0f0f0"/>
<circle cx="795.4" cy="425.9" r="1.3" fill="#f0f0f0"/>
<circle cx="896.3" cy="519.4" r="1.5" fill="#f0c090"/>
<circle cx="956.1" cy="501.6" r="1.5" fill="#f0c090"/>
<circle cx="990.4" cy="518.4" r="1.5" fill="#f0c090"/>
<circle cx="1099.7" cy="501.6" r="1.5" fill="#f0c090"/>
<circle cx="1041.6" cy="585.0" r="2.2" fill="#f0c090"/>
<circle cx="909.7" cy="568.2" r="1.3" fill="#f0c090"/>
<circle cx="756.7" cy="506.0" r="1.2" fill="#f0c090"/>
<circle cx="778.6" cy="589.0" r="1.0" fill="#f0f0f0"/>
<circle cx="875.1" cy="406.7" r="1.0" fill="#f0f0f0"/>
<circle cx="919.2" cy="383.2" r="1.0" fill="#f0c090"/>
<circle cx="1002.2" cy="361.0" r="1.0" fill="#f0c090"/>
<circle cx="1030.8" cy="362.6" r="1.0" fill="#f0c090"/>
<path d="M89 598h3v1h-3z" fill="#e8d0a8" fill-opacity="0.8"/><path d="M90 597h1v1h-1z" fill="#e8d0a8" fill-opacity="0.35"/>
<path d="M108 591h3v1h-3z" fill="#e8d0a8" fill-opacity="0.8"/><path d="M109 590h1v1h-1z" fill="#e8d0a8" fill-opacity="0.35"/>
<path d="M191 596h3v1h-3z" fill="#e8d0a8" fill-opacity="0.8"/><path d="M192 595h1v1h-1z" fill="#e8d0a8" fill-opacity="0.35"/>
<path d="M119 631h3v1h-3z" fill="#e8d0a8" fill-opacity="0.8"/><path d="M120 630h1v1h-1z" fill="#e8d0a8" fill-opacity="0.35"/>
<path d="M114 635h3v1h-3z" fill="#e8d0a8" fill-opacity="0.8"/><path d="M115 634h1v1h-1z" fill="#e8d0a8" fill-opacity="0.35"/>
<path d="M206 634h3v1h-3z" fill="#e8d0a8" fill-opacity="0.8"/><path d="M207 633h1v1h-1z" fill="#e8d0a8" fill-opacity="0.35"/>
<path d="M250 606h3v1h-3z" fill="#e8d0a8" fill-opacity="0.8"/><path d="M251 605h1v1h-1z" fill="#e8d0a8" fill-opacity="0.35"/>
<path d="M364 656h3v1h-3z" fill="#e8d0a8" fill-opacity="0.8"/><path d="M365 655h1v1h-1z" fill="#e8d0a8" fill-opacity="0.35"/>
<path d="M25 626h3v1h-3z" fill="#e8d0a8" fill-opacity="0.8"/><path d="M26 625h1v1h-1z" fill="#e8d0a8" fill-opacity="0.35"/>
<path d="M58 640h3v1h-3z" fill="#e8d0a8" fill-opacity="0.8"/><path d="M59 639h1v1h-1z" fill="#e8d0a8" fill-opacity="0.35"/>
<path d="M161 652h3v1h-3z" fill="#e8d0a8" fill-opacity="0.8"/><path d="M162 651h1v1h-1z" fill="#e8d0a8" fill-opacity="0.35"/>
<path d="M172 680h3v1h-3z" fill="#e8d0a8" fill-opacity="0.8"/><path d="M173 679h1v1h-1z" fill="#e8d0a8" fill-opacity="0.35"/>
<path d="M155 680h3v1h-3z" fill="#e8d0a8" fill-opacity="0.8"/><path d="M156 679h1v1h-1z" fill="#e8d0a8" fill-opacity="0.35"/>
<path d="M212 674h3v1h-3z" fill="#e8d0a8" fill-opacity="0.8"/><path d="M213 673h1v1h-1z" fill="#e8d0a8" fill-opacity="0.35"/>
<path d="M186 702h3v1h-3z" fill="#e8d0a8" fill-opacity="0.8"/><path d="M187 701h1v1h-1z" fill="#e8d0a8" fill-opacity="0.35"/>
<path d="M297 711h3v1h-3z" fill="#e8d0a8" fill-opacity="0.8"/><path d="M298 710h1v1h-1z" fill="#e8d0a8" fill-opacity="0.35"/>
<path d="M274 729h3v1h-3z" fill="#e8d0a8" fill-opacity="0.8"/><path d="M275 728h1v1h-1z" fill="#e8d0a8" fill-opacity="0.35"/>
<path d="M315 757h3v1h-3z" fill="#e8d0a8" fill-opacity="0.8"/><path d="M316 756h1v1h-1z" fill="#e8d0a8" fill-opacity="0.35"/>
<path d="M21 721h1v1h-1z" fill="#000"/>
<path d="M20 720h3v1h-3z" fill="#e8d0a8" fill-opacity="0.8"/><path d="M21 719h1v1h-1z" fill="#e8d0a8" fill-opacity="0.35"/>
<path d="M83 724h1v1h-1z" fill="#000"/>
<path d="M82 723h3v1h-3z" fill="#e8d0a8" fill-opacity="0.8"/><path d="M83 722h1v1h-1z" fill="#e8d0a8" fill-opacity="0.35"/>
<path d="M119 720h1v1h-1z" fill="#000"/>
<path d="M118 719h3v1h-3z" fill="#e8d0a8" fill-opacity="0.8"/><path d="M119 718h1v1h-1z" fill="#e8d0a8" fill-opacity="0.35"/>
<path d="M98 758h1v1h-1z" fill="#000"/>
<path d="M97 757h3v1h-3z" fill="#e8d0a8" fill-opacity="0.8"/><path d="M98 756h1v1h-1z" fill="#e8d0a8" fill-opacity="0.35"/>
<path d="M64 815h1v1h-1z" fill="#000"/>
<path d="M63 814h3v1h-3z" fill="#e8d0a8" fill-opacity="0.8"/><path d="M64 813h1v1h-1z" fill="#e8d0a8" fill-opacity="0.35"/>
<path d="M48 745h1v1h-1z" fill="#000"/>
<path d="M47 744h3v1h-3z" fill="#e8d0a8" fill-opacity="0.8"/><path d="M48 743h1v1h-1z" fill="#e8d0a8" fill-opacity="0.35"/>
<path d="M93 609h3v1h-3z" fill="#f0f0f0" fill-opacity="0.8"/><path d="M94 608h1v1h-1z" fill="#f0f0f0" fill-opacity="0.35"/>
<path d="M295 629h3v1h-3z" fill="#f0f0f0" fill-opacity="0.8"/><path d="M296 628h1v1h-1z" fill="#f0f0f0" fill-opacity="0.35"/>
<path d="M350 595h3v1h-3z" fill="#f0f0f0" fill-opacity="0.8"/><path d="M351 594h1v1h-1z" fill="#f0f0f0" fill-opacity="0.35"/>
<path d="M34 661h1v1h-1z" fill="#000"/>
<path d="M33 660h3v1h-3z" fill="#f0f0f0" fill-opacity="0.8"/><path d="M34 659h1v1h-1z" fill="#f0f0f0" fill-opacity="0.35"/>
<path d="M154 685h3v1h-3z" fill="#f0f0f0" fill-opacity="0.8"/><path d="M155 684h1v1h-1z" fill="#f0f0f0" fill-opacity="0.35"/>
<path d="M218 698h3v1h-3z" fill="#f0f0f0" fill-opacity="0.8"/><path d="M219 697h1v1h-1z" fill="#f0f0f0" fill-opacity="0.35"/>
<path d="M257 727h3v1h-3z" fill="#f0f0f0" fill-opacity="0.8"/><path d="M258 726h1v1h-1z" fill="#f0f0f0" fill-opacity="0.35"/>
<path d="M345 733h3v1h-3z" fill="#f0f0f0" fill-opacity="0.8"/><path d="M346 732h1v1h-1z" fill="#f0f0f0" fill-opacity="0.35"/>
<path d="M365 751h3v1h-3z" fill="#f0f0f0" fill-opacity="0.8"/><path d="M366 750h1v1h-1z" fill="#f0f0f0" fill-opacity="0.35"/>
<path d="M287 761h1v1h-1z" fill="#000"/>
<path d="M286 760h3v1h-3z" fill="#f0f0f0" fill-opacity="0.8"/><path d="M287 759h1v1h-1z" fill="#f0f0f0" fill-opacity="0.35"/>
<path d="M148 738h1v1h-1z" fill="#000"/>
<path d="M147 737h3v1h-3z" fill="#f0f0f0" fill-opacity="0.8"/><path d="M148 736h1v1h-1z" fill="#f0f0f0" fill-opacity="0.35"/>
<path d="M179 739h1v1h-1z" fill="#000"/>
<path d="M178 738h3v1h-3z" fill="#f0f0f0" fill-opacity="0.8"/><path d="M179 737h1v1h-1z" fill="#f0f0f0" fill-opacity="0.35"/>
<path d="M119 784h1v1h-1z" fill="#000"/>
<path d="M118 783h3v1h-3z" fill="#f0f0f0" fill-opacity="0.8"/><path d="M119 782h1v1h-1z" fill="#f0f0f0" fill-opacity="0.35"/>
<path d="M117 791h1v1h-1z" fill="#000"/>
<path d="M116 790h3v1h-3z" fill="#f0f0f0" fill-opacity="0.8"/><path d="M117 789h1v1h-1z" fill="#f0f0f0" fill-opacity="0.35"/>
<path d="M156 775h1v1h-1z" fill="#000"/>
<path d="M155 774h3v1h-3z" fill="#f0f0f0" fill-opacity="0.8"/><path d="M156 773h1v1h-1z" fill="#f0f0f0" fill-opacity="0.35"/>
<path d="M144 779h1v1h-1z" fill="#000"/>
<path d="M143 778h3v1h-3z" fill="#f0f0f0" fill-opacity="0.8"/><path d="M144 777h1v1h-1z" fill="#f0f0f0" fill-opacity="0.35"/>
<path d="M228 775h1v1h-1z" fill="#000"/>
<path d="M227 774h3v1h-3z" fill="#f0f0f0" fill-opacity="0.8"/><path d="M228 773h1v1h-1z" fill="#f0f0f0" fill-opacity="0.35"/>
<path d="M246 778h1v1h-1z" fill="#000"/>
<path d="M245 777h3v1h-3z" fill="#f0f0f0" fill-opacity="0.8"/><path d="M246 776h1v1h-1z" fill="#f0f0f0" fill-opacity="0.35"/>
<path d="M241 787h1v1h-1z" fill="#000"/>
<path d="M240 786h3v1h-3z" fill="#f0f0f0" fill-opacity="0.8"/><path d="M241 785h1v1h-1z" fill="#f0f0f0" fill-opacity="0.35"/>
<path d="M181 793h1v1h-1z" fill="#000"/>
<path d="M180 792h3v1h-3z" fill="#f0f0f0" fill-opacity="0.8"/><path d="M181 791h1v1h-1z" fill="#f0f0f0" fill-opacity="0.35"/>
<path d="M262 802h1v1h-1z" fill="#000"/>
<path d="M261 801h3v1h-3z" fill="#f0f0f0" fill-opacity="0.8"/><path d="M262 800h1v1h-1z" fill="#f0f0f0" fill-opacity="0.35"/>
<path d="M78 817h1v1h-1z" fill="#000"/>
<path d="M77 816h3v1h-3z" fill="#f0f0f0" fill-opacity="0.8"/><path d="M78 815h1v1h-1z" fill="#f0f0f0" fill-opacity="0.35"/>
<path d="M130 820h1v1h-1z" fill="#000"/>
<path d="M129 819h3v1h-3z" fill="#f0f0f0" fill-opacity="0.8"/><path d="M130 818h1v1h-1z" fill="#f0f0f0" fill-opacity="0.35"/>
<path d="M139 825h1v1h-1z" fill="#000"/>
<path d="M138 824h3v1h-3z" fill="#f0f0f0" fill-opacity="0.8"/><path d="M139 823h1v1h-1z" fill="#f0f0f0" fill-opacity="0.35"/>
<path d="M162 824h1v1h-1z" fill="#000"/>
<path d="M161 823h3v1h-3z" fill="#f0f0f0" fill-opacity="0.8"/><path d="M162 822h1v1h-1z" fill="#f0f0f0" fill-opacity="0.35"/>
<path d="M102 833h1v1h-1z" fill="#000"/>
<path d="M101 832h3v1h-3z" fill="#f0f0f0" fill-opacity="0.8"/><path d="M102 831h1v1h-1z" fill="#f0f0f0" fill-opacity="0.35"/>
<path d="M194 831h1v1h-1z" fill="#000"/>
<path d="M193 830h3v1h-3z" fill="#f0f0f0" fill-opacity="0.8"/><path d="M194 829h1v1h-1z" fill="#f0f0f0" fill-opacity="0.35"/>
<path d="M249 824h1v1h-1z" fill="#000"/>
<path d="M248 823h3v1h-3z" fill="#f0f0f0" fill-opacity="0.8"/><path d="M249 822h1v1h-1z" fill="#f0f0f0" fill-opacity="0.35"/>
<path d="M252 828h1v1h-1z" fill="#000"/>
<path d="M251 827h3v1h-3z" fill="#f0f0f0" fill-opacity="0.8"/><path d="M252 826h1v1h-1z" fill="#f0f0f0" fill-opacity="0.35"/>
<path d="M257 842h1v1h-1z" fill="#000"/>
<path d="M256 841h3v1h-3z" fill="#f0f0f0" fill-opacity="0.8"/><path d="M257 840h1v1h-1z" fill="#f0f0f0" fill-opacity="0.35"/>
<path d="M186 843h1v1h-1z" fill="#000"/>
<path d="M185 842h3v1h-3z" fill="#f0f0f0" fill-opacity="0.8"/><path d="M186 841h1v1h-1z" fill="#f0f0f0" fill-opacity="0.35"/>
<path d="M191 844h1v1h-1z" fill="#000"/>
<path d="M190 843h3v1h-3z" fill="#f0f0f0" fill-opacity="0.8"/><path d="M191 842h1v1h-1z" fill="#f0f0f0" fill-opacity="0.35"/>
<path d="M298 836h1v1h-1z" fill="#000"/>
<path d="M297 835h3v1h-3z" fill="#f0f0f0" fill-opacity="0.8"/><path d="M298 834h1v1h-1z" fill="#f0f0f0" fill-opacity="0.35"/>
<path d="M323 850h1v1h-1z" fill="#000"/>
<path d="M322 849h3v1h-3z" fill="#f0f0f0" fill-opacity="0.8"/><path d="M323 848h1v1h-1z" fill="#f0f0f0" fill-opacity="0.35"/>
<path d="M293 857h1v1h-1z" fill="#000"/>
<path d="M292 856h3v1h-3z" fill="#f0f0f0" fill-opacity="0.8"/><path d="M293 855h1v1h-1z" fill="#f0f0f0" fill-opacity="0.35"/>
<path d="M267 861h1v1h-1z" fill="#000"/>
<path d="M266 860h3v1h-3z" fill="#f0f0f0" fill-opacity="0.8"/><path d="M267 859h1v1h-1z" fill="#f0f0f0" fill-opacity="0.35"/>
<path d="M258 856h1v1h-1z" fill="#000"/>
<path d="M257 855h3v1h-3z" fill="#f0f0f0" fill-opacity="0.8"/><path d="M258 854h1v1h-1z" fill="#f0f0f0" fill-opacity="0.35"/>
<path d="M63 792h1v1h-1z" fill="#000"/>
<path d="M62 791h3v1h-3z" fill="#f0f0f0" fill-opacity="0.8"/><path d="M63 790h1v1h-1z" fill="#f0f0f0" fill-opacity="0.35"/>
<path d="M36 692h1v1h-1z" fill="#000"/>
<path d="M35 691h3v1h-3z" fill="#f0f0f0" fill-opacity="0.8"/><path d="M36 690h1v1h-1z" fill="#f0f0f0" fill-opacity="0.35"/>
<path d="M129 698h1v1h-1z" fill="#000"/>
<path d="M128 697h3v1h-3z" fill="#f0f0f0" fill-opacity="0.8"/><path d="M129 696h1v1h-1z" fill="#f0f0f0" fill-opacity="0.35"/>
<path d="M302 633h3v1h-3z" fill="#c0c0f8" fill-opacity="0.8"/><path d="M303 632h1v1h-1z" fill="#c0c0f8" fill-opacity="0.35"/>
<path d="M141 659h3v1h-3z" fill="#c0c0f8" fill-opacity="0.8"/><path d="M142 658h1v1h-1z" fill="#c0c0f8" fill-opacity="0.35"/>
<path d="M163 665h3v1h-3z" fill="#c0c0f8" fill-opacity="0.8"/><path d="M164 664h1v1h-1z" fill="#c0c0f8" fill-opacity="0.35"/>
<path d="M203 644h3v1h-3z" fill="#c0c0f8" fill-opacity="0.8"/><path d="M204 643h1v1h-1z" fill="#c0c0f8" fill-opacity="0.35"/>
<path d="M203 647h3v1h-3z" fill="#c0c0f8" fill-opacity="0.8"/><path d="M204 646h1v1h-1z" fill="#c0c0f8" fill-opacity="0.35"/>
<path d="M214 664h3v1h-3z" fill="#c0c0f8" fill-opacity="0.8"/><path d="M215 663h1v1h-1z" fill="#c0c0f8" fill-opacity="0.35"/>
<path d="M282 700h3v1h-3z" fill="#c0c0f8" fill-opacity="0.8"/><path d="M283 699h1v1h-1z" fill="#c0c0f8" fill-opacity="0.35"/>
<path d="M317 712h3v1h-3z" fill="#c0c0f8" fill-opacity="0.8"/><path d="M318 711h1v1h-1z" fill="#c0c0f8" fill-opacity="0.35"/>
<path d="M105 750h1v1h-1z" fill="#000"/>
<path d="M104 749h3v1h-3z" fill="#c0c0f8" fill-opacity="0.8"/><path d="M105 748h1v1h-1z" fill="#c0c0f8" fill-opacity="0.35"/>
<path d="M105 754h1v1h-1z" fill="#000"/>
<path d="M104 753h3v1h-3z" fill="#c0c0f8" fill-opacity="0.8"/><path d="M105 752h1v1h-1z" fill="#c0c0f8" fill-opacity="0.35"/>
<path d="M91 756h1v1h-1z" fill="#000"/>
<path d="M90 755h3v1h-3z" fill="#c0c0f8" fill-opacity="0.8"/><path d="M91 754h1v1h-1z" fill="#c0c0f8" fill-opacity="0.35"/>
<path d="M183 769h1v1h-1z" fill="#000"/>
<path d="M182 768h3v1h-3z" fill="#c0c0f8" fill-opacity="0.8"/><path d="M183 767h1v1h-1z" fill="#c0c0f8" fill-opacity="0.35"/>
<path d="M204 664h3v1h-3z" fill="#ffff90" fill-opacity="0.8"/><path d="M205 663h1v1h-1z" fill="#ffff90" fill-opacity="0.35"/>
<path d="M7 673h1v1h-1z" fill="#000"/>
<path d="M6 672h3v1h-3z" fill="#ffff90" fill-opacity="0.8"/><path d="M7 671h1v1h-1z" fill="#ffff90" fill-opacity="0.35"/>
<circle cx="97.5" cy="643.6" r="1.5" fill="#ffff90"/>
<circle cx="137.9" cy="648.3" r="1.3" fill="#ffff90"/>
<circle cx="228.7" cy="660.4" r="2.5" fill="#ffff90"/>
<circle cx="198.4" cy="687.3" r="2.0" fill="#d0d0ff"/>
<circle cx="252.2" cy="682.3" r="2.5" fill="#c0c0f8"/>
<circle cx="243.1" cy="673.8" r="1.2" fill="#f0c090"/>
<circle cx="332.9" cy="690.3" r="1.5" fill="#c0c0f8"/>
<circle cx="237.1" cy="637.5" r="1.3" fill="#c0c0f8"/>
<circle cx="256.6" cy="640.2" r="1.3" fill="#f0c090"/>
<circle cx="273.4" cy="713.2" r="1.5" fill="#c0c0f8"/>
<circle cx="331.2" cy="718.9" r="1.5" fill="#f0c090"/>
<circle cx="137.9" cy="785.5" r="2.2" fill="#c0c0f8"/>
<circle cx="224.6" cy="755.3" r="1.8" fill="#f0c090"/>
<circle cx="223.6" cy="752.6" r="1.0" fill="#c0c0f8"/>
<circle cx="169.2" cy="765.4" r="1.2" fill="#f0c090"/>
<circle cx="161.4" cy="789.6" r="1.2" fill="#ffff90"/>
<circle cx="215.2" cy="813.1" r="1.2" fill="#f0c090"/>
<circle cx="314.4" cy="805.7" r="1.2" fill="#f0f0f0"/>
<circle cx="34.3" cy="724.3" r="1.2" fill="#c0c0f8"/>
<path d="M425 583h3v1h-3z" fill="#e8d0a8" fill-opacity="0.8"/><path d="M426 582h1v1h-1z" fill="#e8d0a8" fill-opacity="0.35"/>
<path d="M491 600h3v1h-3z" fill="#e8d0a8" fill-opacity="0.8"/><path d="M492 599h1v1h-1z" fill="#e8d0a8" fill-opacity="0.35"/>
<path d="M535 596h3v1h-3z" fill="#e8d0a8" fill-opacity="0.8"/><path d="M536 595h1v1h-1z" fill="#e8d0a8" fill-opacity="0.35"/>
<path d="M491 653h3v1h-3z" fill="#e8d0a8" fill-opacity="0.8"/><path d="M492 652h1v1h-1z" fill="#e8d0a8" fill-opacity="0.35"/>
<path d="M463 728h3v1h-3z" fill="#e8d0a8" fill-opacity="0.8"/><path d="M464 727h1v1h-1z" fill="#e8d0a8" fill-opacity="0.35"/>
<path d="M489 732h3v1h-3z" fill="#e8d0a8" fill-opacity="0.8"/><path d="M490 731h1v1h-1z" fill="#e8d0a8" fill-opacity="0.35"/>
<path d="M388 749h3v1h-3z" fill="#e8d0a8" fill-opacity="0.8"/><path d="M389 748h1v1h-1z" fill="#e8d0a8" fill-opacity="0.35"/>
<path d="M569 719h3v1h-3z" fill="#e8d0a8" fill-opacity="0.8"/><path d="M570 718h1v1h-1z" fill="#e8d0a8" fill-opacity="0.35"/>
<path d="M638 738h3v1h-3z" fill="#e8d0a8" fill-opacity="0.8"/><path d="M639 737h1v1h-1z" fill="#e8d0a8" fill-opacity="0.35"/>
<path d="M650 748h3v1h-3z" fill="#e8d0a8" fill-opacity="0.8"/><path d="M651 747h1v1h-1z" fill="#e8d0a8" fill-opacity="0.35"/>
<path d="M706 621h3v1h-3z" fill="#e8d0a8" fill-opacity="0.8"/><path d="M707 620h1v1h-1z" fill="#e8d0a8" fill-opacity="0.35"/>
<path d="M463 659h3v1h-3z" fill="#f0f0f0" fill-opacity="0.8"/><path d="M464 658h1v1h-1z" fill="#f0f0f0" fill-opacity="0.35"/>
<path d="M418 675h3v1h-3z" fill="#f0f0f0" fill-opacity="0.8"/><path d="M419 674h1v1h-1z" fill="#f0f0f0" fill-opacity="0.35"/>
<path d="M404 707h3v1h-3z" fill="#f0f0f0" fill-opacity="0.8"/><path d="M405 706h1v1h-1z" fill="#f0f0f0" fill-opacity="0.35"/>
<path d="M391 720h3v1h-3z" fill="#f0f0f0" fill-opacity="0.8"/><path d="M392 719h1v1h-1z" fill="#f0f0f0" fill-opacity="0.35"/>
<path d="M388 801h1v1h-1z" fill="#000"/>
<path d="M387 800h3v1h-3z" fill="#f0f0f0" fill-opacity="0.8"/><path d="M388 799h1v1h-1z" fill="#f0f0f0" fill-opacity="0.35"/>
<path d="M654 702h3v1h-3z" fill="#f0f0f0" fill-opacity="0.8"/><path d="M655 701h1v1h-1z" fill="#f0f0f0" fill-opacity="0.35"/>
<path d="M630 726h3v1h-3z" fill="#f0f0f0" fill-opacity="0.8"/><path d="M631 725h1v1h-1z" fill="#f0f0f0" fill-opacity="0.35"/>
<path d="M639 750h3v1h-3z" fill="#f0f0f0" fill-opacity="0.8"/><path d="M640 749h1v1h-1z" fill="#f0f0f0" fill-opacity="0.35"/>
<path d="M632 638h3v1h-3z" fill="#f0f0f0" fill-opacity="0.8"/><path d="M633 637h1v1h-1z" fill="#f0f0f0" fill-opacity="0.35"/>
<path d="M594 788h3v1h-3z" fill="#f0f0f0" fill-opacity="0.8"/><path d="M595 787h1v1h-1z" fill="#f0f0f0" fill-opacity="0.35"/>
<path d="M692 799h1v1h-1z" fill="#000"/>
<path d="M691 798h3v1h-3z" fill="#f0f0f0" fill-opacity="0.8"/><path d="M692 797h1v1h-1z" fill="#f0f0f0" fill-opacity="0.35"/>
<path d="M578 808h1v1h-1z" fill="#000"/>
<path d="M577 807h3v1h-3z" fill="#f0f0f0" fill-opacity="0.8"/><path d="M578 806h1v1h-1z" fill="#f0f0f0" fill-opacity="0.35"/>
<path d="M557 814h1v1h-1z" fill="#000"/>
<path d="M556 813h3v1h-3z" fill="#f0f0f0" fill-opacity="0.8"/><path d="M557 812h1v1h-1z" fill="#f0f0f0" fill-opacity="0.35"/>
<path d="M417 831h1v1h-1z" fill="#000"/>
<path d="M416 830h3v1h-3z" fill="#f0f0f0" fill-opacity="0.8"/><path d="M417 829h1v1h-1z" fill="#f0f0f0" fill-opacity="0.35"/>
<path d="M497 856h1v1h-1z" fill="#000"/>
<path d="M496 855h3v1h-3z" fill="#f0f0f0" fill-opacity="0.8"/><path d="M497 854h1v1h-1z" fill="#f0f0f0" fill-opacity="0.35"/>
<path d="M536 862h1v1h-1z" fill="#000"/>
<path d="M535 861h3v1h-3z" fill="#f0f0f0" fill-opacity="0.8"/><path d="M536 860h1v1h-1z" fill="#f0f0f0" fill-opacity="0.35"/>
<circle cx="435.5" cy="607.2" r="1.5" fill="#ffff90"/>
<circle cx="402.5" cy="621.7" r="1.2" fill="#ffff90"/>
<circle cx="386.7" cy="608.9" r="1.2" fill="#f0c090"/>
<circle cx="483.2" cy="619.7" r="1.3" fill="#f0c090"/>
<circle cx="452.3" cy="611.6" r="1.0" fill="#f0f0f0"/>
<circle cx="418.7" cy="722.6" r="2.0" fill="#f0f0f0"/>
<circle cx="397.5" cy="737.4" r="1.5" fill="#f0c090"/>
<circle cx="436.2" cy="733.4" r="1.0" fill="#ffff90"/>
<circle cx="534.0" cy="746.2" r="1.0" fill="#f0f0f0"/>
<circle cx="538.1" cy="787.2" r="1.0" fill="#f0f0f0"/>
<circle cx="546.5" cy="689.7" r="1.5" fill="#f0c090"/>
<circle cx="549.8" cy="682.9" r="1.0" fill="#f0c090"/>
<circle cx="581.8" cy="716.6" r="1.5" fill="#f0f0f0"/>
<circle cx="619.4" cy="634.1" r="1.0" fill="#f0f0f0"/>
<circle cx="647.3" cy="627.4" r="1.0" fill="#f0c090"/>
<circle cx="674.9" cy="614.0" r="1.0" fill="#f0f0f0"/>
<circle cx="704.5" cy="615.0" r="1.5" fill="#f0c090"/>
<circle cx="739.8" cy="632.5" r="1.2" fill="#f0c090"/>
<circle cx="716.3" cy="677.2" r="1.2" fill="#ffff90"/>
<circle cx="736.5" cy="776.1" r="1.5" fill="#f0f0f0"/>
<circle cx="588.5" cy="790.6" r="1.5" fill="#f0c090"/>
<circle cx="660.8" cy="774.4" r="1.0" fill="#f0f0f0"/>
<path d="M937 618h3v1h-3z" fill="#f0f0f0" fill-opacity="0.8"/><path d="M938 617h1v1h-1z" fill="#f0f0f0" fill-opacity="0.35"/>
<path d="M1035 621h3v1h-3z" fill="#f0f0f0" fill-opacity="0.8"/><path d="M1036 620h1v1h-1z" fill="#f0f0f0" fill-opacity="0.35"/>
<path d="M1064 636h3v1h-3z" fill="#f0f0f0" fill-opacity="0.8"/><path d="M1065 635h1v1h-1z" fill="#f0f0f0" fill-opacity="0.35"/>
<path d="M795 673h3v1h-3z" fill="#f0f0f0" fill-opacity="0.8"/><path d="M796 672h1v1h-1z" fill="#f0f0f0" fill-opacity="0.35"/>
<path d="M856 684h3v1h-3z" fill="#f0f0f0" fill-opacity="0.8"/><path d="M857 683h1v1h-1z" fill="#f0f0f0" fill-opacity="0.35"/>
<path d="M836 696h3v1h-3z" fill="#f0f0f0" fill-opacity="0.8"/><path d="M837 695h1v1h-1z" fill="#f0f0f0" fill-opacity="0.35"/>
<path d="M803 721h3v1h-3z" fill="#f0f0f0" fill-opacity="0.8"/><path d="M804 720h1v1h-1z" fill="#f0f0f0" fill-opacity="0.35"/>
<path d="M994 687h3v1h-3z" fill="#f0f0f0" fill-opacity="0.8"/><path d="M995 686h1v1h-1z" fill="#f0f0f0" fill-opacity="0.35"/>
<path d="M768 802h1v1h-1z" fill="#000"/>
<path d="M767 801h3v1h-3z" fill="#f0f0f0" fill-opacity="0.8"/><path d="M768 800h1v1h-1z" fill="#f0f0f0" fill-opacity="0.35"/>
<path d="M858 802h1v1h-1z" fill="#000"/>
<path d="M857 801h3v1h-3z" fill="#f0f0f0" fill-opacity="0.8"/><path d="M858 800h1v1h-1z" fill="#f0f0f0" fill-opacity="0.35"/>
<path d="M952 797h1v1h-1z" fill="#000"/>
<path d="M951 796h3v1h-3z" fill="#f0f0f0" fill-opacity="0.8"/><path d="M952 795h1v1h-1z" fill="#f0f0f0" fill-opacity="0.35"/>
<path d="M850 835h1v1h-1z" fill="#000"/>
<path d="M849 834h3v1h-3z" fill="#f0f0f0" fill-opacity="0.8"/><path d="M850 833h1v1h-1z" fill="#f0f0f0" fill-opacity="0.35"/>
<path d="M925 833h1v1h-1z" fill="#000"/>
<path d="M924 832h3v1h-3z" fill="#f0f0f0" fill-opacity="0.8"/><path d="M925 831h1v1h-1z" fill="#f0f0f0" fill-opacity="0.35"/>
<path d="M989 841h1v1h-1z" fill="#000"/>
<path d="M988 840h3v1h-3z" fill="#f0f0f0" fill-opacity="0.8"/><path d="M989 839h1v1h-1z" fill="#f0f0f0" fill-opacity="0.35"/>
<path d="M1116 843h1v1h-1z" fill="#000"/>
<path d="M1115 842h3v1h-3z" fill="#f0f0f0" fill-opacity="0.8"/><path d="M1116 841h1v1h-1z" fill="#f0f0f0" fill-opacity="0.35"/>
<path d="M997 868h1v1h-1z" fill="#000"/>
<path d="M996 867h3v1h-3z" fill="#f0f0f0" fill-opacity="0.8"/><path d="M997 866h1v1h-1z" fill="#f0f0f0" fill-opacity="0.35"/>
<path d="M785 844h1v1h-1z" fill="#000"/>
<path d="M784 843h3v1h-3z" fill="#f0f0f0" fill-opacity="0.8"/><path d="M785 842h1v1h-1z" fill="#f0f0f0" fill-opacity="0.35"/>
<path d="M1078 684h1v1h-1z" fill="#000"/>
<path d="M1077 683h3v1h-3z" fill="#e8d0a8" fill-opacity="0.8"/><path d="M1078 682h1v1h-1z" fill="#e8d0a8" fill-opacity="0.35"/>
<path d="M1055 722h1v1h-1z" fill="#000"/>
<path d="M1054 721h3v1h-3z" fill="#e8d0a8" fill-opacity="0.8"/><path d="M1055 720h1v1h-1z" fill="#e8d0a8" fill-opacity="0.35"/>
<path d="M1085 741h1v1h-1z" fill="#000"/>
<path d="M1084 740h3v1h-3z" fill="#e8d0a8" fill-opacity="0.8"/><path d="M1085 739h1v1h-1z" fill="#e8d0a8" fill-opacity="0.35"/>
<path d="M899 712h3v1h-3z" fill="#e8d0a8" fill-opacity="0.8"/><path d="M900 711h1v1h-1z" fill="#e8d0a8" fill-opacity="0.35"/>
<path d="M838 820h1v1h-1z" fill="#000"/>
<path d="M837 819h3v1h-3z" fill="#e8d0a8" fill-opacity="0.8"/><path d="M838 818h1v1h-1z" fill="#e8d0a8" fill-opacity="0.35"/>
<path d="M841 844h1v1h-1z" fill="#000"/>
<path d="M840 843h3v1h-3z" fill="#e8d0a8" fill-opacity="0.8"/><path d="M841 842h1v1h-1z" fill="#e8d0a8" fill-opacity="0.35"/>
<path d="M763 610h3v1h-3z" fill="#e8d0a8" fill-opacity="0.8"/><path d="M764 609h1v1h-1z" fill="#e8d0a8" fill-opacity="0.35"/>
<path d="M878 625h3v1h-3z" fill="#e8d0a8" fill-opacity="0.8"/><path d="M879 624h1v1h-1z" fill="#e8d0a8" fill-opacity="0.35"/>
<path d="M823 636h3v1h-3z" fill="#e8d0a8" fill-opacity="0.8"/><path d="M824 635h1v1h-1z" fill="#e8d0a8" fill-opacity="0.35"/>
<path d="M1105 591h3v1h-3z" fill="#e8d0a8" fill-opacity="0.8"/><path d="M1106 590h1v1h-1z" fill="#e8d0a8" fill-opacity="0.35"/>
<path d="M1112 582h3v1h-3z" fill="#e8d0a8" fill-opacity="0.8"/><path d="M1113 581h1v1h-1z" fill="#e8d0a8" fill-opacity="0.35"/>
<path d="M1119 691h1v1h-1z" fill="#000"/>
<path d="M1118 690h3v1h-3z" fill="#c0c0f8" fill-opacity="0.8"/><path d="M1119 689h1v1h-1z" fill="#c0c0f8" fill-opacity="0.35"/>
<circle cx="1032.5" cy="807.4" r="2.2" fill="#f4d0b0"/>
<circle cx="906.4" cy="810.8" r="1.5" fill="#ff9090"/>
<circle cx="938.3" cy="843.7" r="1.5" fill="#f0c090"/>
<circle cx="1027.4" cy="820.9" r="1.2" fill="#f0f0f0"/>
<circle cx="1052.7" cy="841.0" r="1.0" fill="#f0f0f0"/>
<circle cx="778.6" cy="588.7" r="1.0" fill="#f0f0f0"/>
<circle cx="872.7" cy="612.3" r="1.2" fill="#f0c090"/>
<circle cx="761.8" cy="709.2" r="1.0" fill="#f0c090"/>
<circle cx="770.2" cy="773.1" r="1.0" fill="#ffff90"/>
<circle cx="884.5" cy="861.2" r="1.0" fill="#f0c090"/>
<path d="M25.1 245.1A9.5 9.5 0 0 0 20.7 256.7M21.8 258.9A9.5 9.5 0 0 0 38.2 257.5" fill="none" stroke="#ffff00" stroke-width="0.95" shape-rendering="crispEdges"/>
<path d="M331.2 211.5A9.3 9.3 0 0 0 329.1 227.8M335.2 229.5A9.3 9.3 0 0 0 342.0 225.5" fill="none" stroke="#ffff00" stroke-width="0.95" shape-rendering="crispEdges"/>
<path d="M354.8 136.1A9.2 9.2 0 0 0 348.1 143.4M348.1 146.6A9.2 9.2 0 0 0 354.8 153.9M361.8 153.0A9.2 9.2 0 0 0 361.1 136.7" fill="none" stroke="#ffff00" stroke-width="0.95" shape-rendering="crispEdges"/>
<path d="M396.0 104.9A9.2 9.2 0 0 0 390.3 111.4" fill="none" stroke="#ffff00" stroke-width="0.95" shape-rendering="crispEdges"/>
<path d="M383.5 120.8A9.5 9.5 0 0 0 378.1 127.8M378.6 132.6A9.5 9.5 0 0 0 394.8 135.5" fill="none" stroke="#ffff00" stroke-width="0.95" shape-rendering="crispEdges"/>
<path d="M72.5 468.6A9.4 9.4 0 0 0 64.0 479.6M65.2 482.7A9.4 9.4 0 0 0 81.8 482.0" fill="none" stroke="#ffff00" stroke-width="0.95" shape-rendering="crispEdges"/>
<path d="M225.4 495.4A9.4 9.4 0 0 0 221.7 509.3M224.7 512.0A9.4 9.4 0 0 0 238.5 506.3" fill="none" stroke="#ffff00" stroke-width="0.95" shape-rendering="crispEdges"/>
<path d="M266.9 601.9A9.4 9.4 0 0 0 263.2 615.8M265.5 618.1A9.4 9.4 0 0 0 279.7 613.6" fill="none" stroke="#ffff00" stroke-width="0.95" shape-rendering="crispEdges"/>
<path d="M143.3 631.1A9.4 9.4 0 0 0 139.2 642.4M140.3 644.6A9.4 9.4 0 0 0 146.4 648.5M150.4 648.3A9.4 9.4 0 0 0 156.5 643.2" fill="none" stroke="#ffff00" stroke-width="0.95" shape-rendering="crispEdges"/>
<path d="M143.3 550.6A9.6 9.6 0 0 0 137.9 556.2M137.9 562.8A9.6 9.6 0 0 0 143.6 568.5M155.6 555.4A9.6 9.6 0 0 0 151.0 550.8" fill="none" stroke="#ffff00" stroke-width="0.95" shape-rendering="crispEdges"/>
<path d="M153.6 548.5A9.4 9.4 0 0 0 148.3 555.4M149.1 561.0A9.4 9.4 0 0 0 151.0 563.6M160.8 565.8A9.4 9.4 0 0 0 166.4 560.2" fill="none" stroke="#ffff00" stroke-width="0.95" shape-rendering="crispEdges"/>
<ellipse cx="936.3" cy="164.8" rx="10.4" ry="4.8" transform="rotate(0 936.3 164.8)" fill="none" stroke="#ff8080" stroke-width="0.95" shape-rendering="crispEdges"/>
<ellipse cx="928.5" cy="294" rx="10.5" ry="4.9" transform="rotate(0 928.5 294)" fill="none" stroke="#ff8080" stroke-width="0.95" shape-rendering="crispEdges"/>
<ellipse cx="786.3" cy="429.2" rx="10.3" ry="4.8" transform="rotate(0 786.3 429.2)" fill="none" stroke="#ff8080" stroke-width="0.95" shape-rendering="crispEdges"/>
<ellipse cx="1028.5" cy="65.7" rx="7" ry="3.6" transform="rotate(0 1028.5 65.7)" fill="none" stroke="#ff8080" stroke-width="0.95" shape-rendering="crispEdges"/>
<ellipse cx="1026.5" cy="74" rx="8.3" ry="4.2" transform="rotate(0 1026.5 74)" fill="none" stroke="#ff8080" stroke-width="0.95" shape-rendering="crispEdges"/>
<ellipse cx="1027.8" cy="68" rx="12" ry="3.6" transform="rotate(46 1027.8 68)" fill="none" stroke="#ff8080" stroke-width="0.95" shape-rendering="crispEdges"/>
<g fill="none" stroke="#00ff40" shape-rendering="crispEdges"><rect x="401.5" y="228.5" width="20" height="20" stroke-width="1"/><rect x="381.5" y="418.5" width="20" height="20" stroke-width="1"/><rect x="407" y="465" width="20" height="20" stroke-width="2"/></g>
<g fill="none" stroke="#8888ff" stroke-width="0.95" shape-rendering="crispEdges"><circle cx="445.5" cy="639.5" r="10"/><path d="M435 639.5H456M445.5 629V650"/></g>
<rect x="564" y="460" width="4" height="2" fill="#8080ff"/>
<g stroke="#80ff00" stroke-width="1" shape-rendering="crispEdges" fill="none"><path d="M867 327.5H877M872.5 322V332"/><path d="M1062 394.5H1072M1067.5 389V399"/></g>
<text transform="translate(877.7 324.2) scale(0.72 1.3)" x="0" y="0" text-anchor="middle" font-family="DejaVu Sans,sans-serif" font-size="14" font-weight="bold" fill="#80ff00" stroke="#80ff00" stroke-width="0.4">♅</text>
<text x="1073" y="387" text-anchor="middle" font-family="DejaVu Sans,sans-serif" font-size="12" font-weight="bold" fill="#80ff00" stroke="#80ff00" stroke-width="0.5">♀</text>
<defs><filter id="al" filterUnits="userSpaceOnUse" x="0" y="0" width="1130" height="872" color-interpolation-filters="sRGB"><feComponentTransfer><feFuncA type="discrete" tableValues="0 1"/></feComponentTransfer></filter></defs>
<g filter="url(#al)">
<text class="lbl" x="30.2" y="249.5" fill="#ffff00">M 44</text>
<text class="lbl" x="335.2" y="215.5" fill="#ffff00">M 35</text>
<text class="lbl" x="358.2" y="150" fill="#ffff00">M 37</text>
<text class="lbl" x="400.2" y="110" fill="#ffff00">M 38</text>
<text class="lbl" x="387.7" y="126" fill="#ffff00">M 36</text>
<text class="lbl" x="411.2" y="234.5" fill="#00ff40">M 1</text>
<text class="lbl" x="1033.2" y="72" fill="#ff8080">M 110</text>
<text class="lbl" x="1029.2" y="88" fill="#ff8080">M 32</text>
<text class="lbl" x="937.2" y="161" fill="#ff8080">M 33</text>
<text class="lbl" x="929.2" y="290" fill="#ff8080">M 74</text>
<text class="lbl" x="788.2" y="425" fill="#ff8080">M 77</text>
<text class="lbl" x="73.7" y="474" fill="#ffff00">M 48</text>
<text class="lbl" x="230.2" y="500" fill="#ffff00">M 50</text>
<text class="lbl" x="157.7" y="553" fill="#ffff00">M 47</text>
<text class="lbl" x="147.2" y="573" fill="#ffff00">M 46</text>
<text class="lbl" x="271.2" y="606" fill="#ffff00">M 41</text>
<text class="lbl" x="148.2" y="635.5" fill="#ffff00">M 93</text>
<text class="lbl" x="392.2" y="424.5" fill="#00ff40">M 78</text>
<text class="lbl" x="417.7" y="471.5" fill="#00ff40">M 42</text>
<text class="lbl" x="417.7" y="488.5" fill="#00ff40">M 43</text>
<text class="lbl" x="446.2" y="634.5" fill="#8080ff">M 79</text>
</g>
<g shape-rendering="crispEdges"><rect x="4.5" y="783.5" width="48" height="51" fill="#000" stroke="#fff"/>
<rect x="4" y="835" width="168" height="16" fill="#000"/><rect x="4" y="851" width="180" height="16" fill="#000"/>
<path d="M35.5 801V815.5H23" stroke="#fff" fill="none"/></g>
<g filter="url(#al)"><text class="lbl" x="35.5" y="797.5" fill="#fff" style="font-size:12px">N</text>
<text class="lbl" x="14.5" y="827.5" fill="#fff" style="font-size:12px">E</text>
<text class="lbl" x="5" y="848" fill="#fff">90.000</text>
<text class="lbl" x="5" y="864" fill="#fff" style="letter-spacing:-0.13px">15 Feb 2020 19:00:00 CET</text></g>
</svg>
</body></html>
